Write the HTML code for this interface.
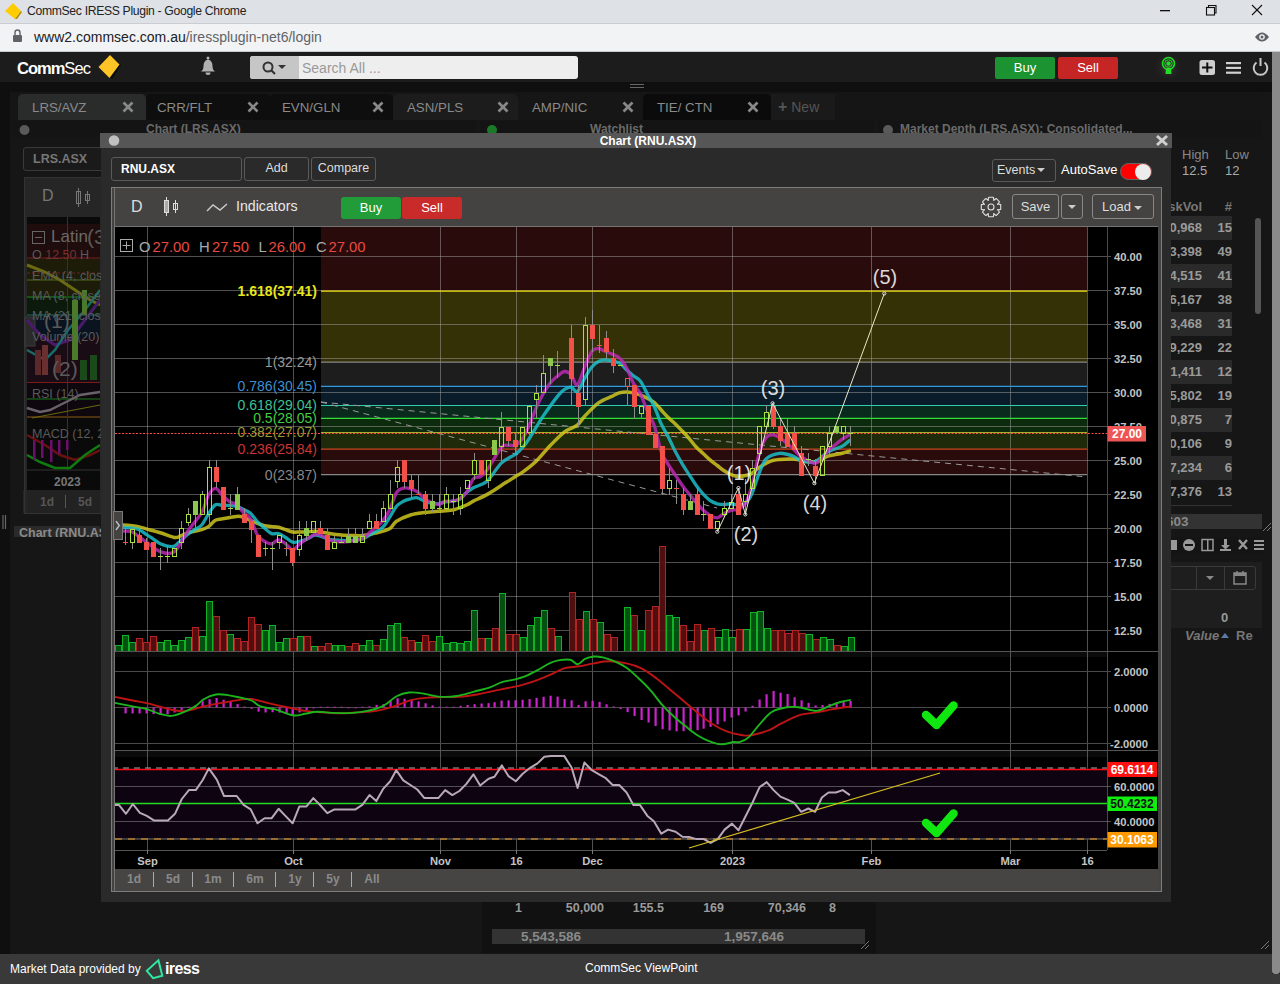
<!DOCTYPE html>
<html><head><meta charset="utf-8">
<style>
*{box-sizing:border-box}
html,body{margin:0;padding:0}
body{width:1280px;height:984px;overflow:hidden;position:relative;background:#161616;font-family:"Liberation Sans",sans-serif}
.a{position:absolute}
.t{position:absolute;white-space:nowrap;line-height:1}
</style></head>
<body>
<!-- chrome title bar -->
<div class="a" style="left:0;top:0;width:1280px;height:24px;background:#dee1e6"></div>
<svg class="a" style="left:0;top:0" width="1280" height="52">
  <polygon points="13,3 21,11 15,19 5,11" fill="#ffcc00"/>
  <polygon points="21,11 15,19 17,19 22,12" fill="#b08a00"/>
  <rect x="1160" y="10" width="10" height="1.3" fill="#111"/>
  <rect x="1206.5" y="7.5" width="8" height="7.5" fill="none" stroke="#111" stroke-width="1.1"/>
  <polyline points="1208.5,7 1208.5,5.5 1216,5.5 1216,13 1215,13" fill="none" stroke="#111" stroke-width="1.1"/>
  <line x1="1252" y1="5" x2="1262" y2="15" stroke="#111" stroke-width="1.1"/>
  <line x1="1262" y1="5" x2="1252" y2="15" stroke="#111" stroke-width="1.1"/>
  <rect x="0" y="24" width="1280" height="27" fill="#f1f3f4"/>
  <rect x="0" y="51" width="1280" height="1" fill="#c8c8c8"/><rect x="0" y="23" width="1280" height="1" fill="#c9ccd1"/>
  <rect x="13" y="35" width="9" height="7" rx="1" fill="#5f6368"/>
  <path d="M15 35 v-2.5 a2.5 2.5 0 0 1 5 0 v2.5" fill="none" stroke="#5f6368" stroke-width="1.4"/>
  <path d="M1255 37 q7-9 14 0 q-7 9-14 0z" fill="#5f6368"/>
  <circle cx="1262" cy="37" r="2.8" fill="#f1f3f4"/>
  <circle cx="1262" cy="37" r="1.5" fill="#5f6368"/>
</svg>
<div class="t" style="left:27px;top:5px;font-size:12.2px;letter-spacing:-0.33px;color:#222">CommSec IRESS Plugin - Google Chrome</div>
<div class="t" style="left:34px;top:30px;font-size:14px;color:#202124">www2.commsec.com.au<span style="color:#5f6368">/iressplugin-net6/login</span></div>

<!-- app header -->
<div class="a" style="left:0;top:52px;width:1280px;height:30px;background:#1c1c1c"></div>
<div class="t" style="left:17px;top:60px;font-size:16.5px;color:#fff;letter-spacing:-0.9px"><b style="letter-spacing:-1px">Comm</b>Sec</div>
<svg class="a" style="left:0;top:52px" width="1280" height="30">
  <polygon points="111,4 121,13 112,27 101,16" fill="#0c0c0c"/>
  <polygon points="110,3 119.5,12.5 109.5,26 98.5,15" fill="#ffc425"/>
  <path d="M201 19.5 q2.5-1.5 2.5-5.5 q0-5.5 4.5-6.5 q4.5 1 4.5 6.5 q0 4 2.5 5.5z" fill="#b0b0b0"/>
  <circle cx="208" cy="6" r="1.5" fill="#b0b0b0"/>
  <path d="M205.5 20.5 a2.5 2.5 0 0 0 5 0z" fill="#b0b0b0"/>
  <rect x="250" y="4" width="328" height="23" rx="3" fill="#eeeeee"/>
  <path d="M250 7 a3 3 0 0 1 3-3 h46 v23 h-46 a3 3 0 0 1-3-3z" fill="#c6c6c6"/>
  <circle cx="268" cy="15" r="4.5" fill="none" stroke="#333" stroke-width="2"/>
  <line x1="271" y1="18" x2="275" y2="22" stroke="#333" stroke-width="2.2"/>
  <polygon points="278,13 286,13 282,17" fill="#333"/>
  <rect x="995" y="5" width="60" height="22" rx="2" fill="#1c9331"/>
  <rect x="1058" y="5" width="60" height="22" rx="2" fill="#c62525"/>
  <defs><radialGradient id="glow"><stop offset="0" stop-color="#444" stop-opacity="0.9"/><stop offset="1" stop-color="#1c1c1c" stop-opacity="0"/></radialGradient></defs>
  <circle cx="1168" cy="15" r="15" fill="url(#glow)"/>
  <circle cx="1168.5" cy="11.5" r="6" fill="none" stroke="#22dd22" stroke-width="1.6"/>
  <circle cx="1168.5" cy="11.5" r="2.2" fill="#22dd22"/>
  <circle cx="1168.5" cy="11.5" r="3.8" fill="none" stroke="#22dd22" stroke-width="1"/>
  <path d="M1166 16 h5 l0.5 6 h-6z" fill="#22dd22"/>
  <rect x="1199.5" y="8" width="15.5" height="15" rx="2.5" fill="#cfcfcf"/>
  <rect x="1202" y="14.5" width="10.5" height="2" fill="#111"/>
  <rect x="1206.3" y="10.5" width="2" height="10" fill="#111"/>
  <rect x="1226" y="10" width="15" height="2.2" fill="#d0d0d0"/>
  <rect x="1226" y="14.8" width="15" height="2.2" fill="#d0d0d0"/>
  <rect x="1226" y="19.6" width="15" height="2.2" fill="#d0d0d0"/>
  <path d="M1256.5 10.5 a6.8 6.8 0 1 0 8 0" fill="none" stroke="#c8c8c8" stroke-width="2"/>
  <line x1="1260.5" y1="6" x2="1260.5" y2="14" stroke="#c8c8c8" stroke-width="2"/>
</svg>
<div class="t" style="left:302px;top:61px;font-size:14px;color:#999">Search All ...</div>
<div class="t" style="left:995px;top:61px;width:60px;text-align:center;font-size:13px;color:#fff">Buy</div>
<div class="t" style="left:1058px;top:61px;width:60px;text-align:center;font-size:13px;color:#fff">Sell</div>

<!-- below header -->
<div class="a" style="left:0;top:82px;width:1272px;height:10px;background:#0f0f0f"></div>
<div class="a" style="left:12px;top:92px;width:1250px;height:29px;background:#151515"></div>
<div class="a" style="left:18px;top:94px;width:128px;height:26px;background:#2a2b2b;border-radius:5px 5px 0 0"></div>
<div class="t" style="left:32px;top:101px;font-size:13.3px;color:#8a8a8a">LRS/AVZ</div>
<svg class="a" style="left:121.5px;top:101px" width="12" height="12"><line x1="1.5" y1="1.5" x2="10.5" y2="10.5" stroke="#888" stroke-width="2.6"/><line x1="10.5" y1="1.5" x2="1.5" y2="10.5" stroke="#888" stroke-width="2.6"/></svg>
<div class="a" style="left:146px;top:94px;width:124px;height:26px;background:#0e0e0e;border-radius:5px 5px 0 0"></div>
<div class="t" style="left:157px;top:101px;font-size:13.3px;color:#8a8a8a">CRR/FLT</div>
<svg class="a" style="left:246.5px;top:101px" width="12" height="12"><line x1="1.5" y1="1.5" x2="10.5" y2="10.5" stroke="#888" stroke-width="2.6"/><line x1="10.5" y1="1.5" x2="1.5" y2="10.5" stroke="#888" stroke-width="2.6"/></svg>
<div class="a" style="left:270px;top:94px;width:123px;height:26px;background:#0e0e0e;border-radius:5px 5px 0 0"></div>
<div class="t" style="left:282px;top:101px;font-size:13.3px;color:#8a8a8a">EVN/GLN</div>
<svg class="a" style="left:371.5px;top:101px" width="12" height="12"><line x1="1.5" y1="1.5" x2="10.5" y2="10.5" stroke="#888" stroke-width="2.6"/><line x1="10.5" y1="1.5" x2="1.5" y2="10.5" stroke="#888" stroke-width="2.6"/></svg>
<div class="a" style="left:393px;top:94px;width:125px;height:26px;background:#1c1c1c;border-radius:5px 5px 0 0"></div>
<div class="t" style="left:407px;top:101px;font-size:13.3px;color:#8a8a8a">ASN/PLS</div>
<svg class="a" style="left:496.5px;top:101px" width="12" height="12"><line x1="1.5" y1="1.5" x2="10.5" y2="10.5" stroke="#888" stroke-width="2.6"/><line x1="10.5" y1="1.5" x2="1.5" y2="10.5" stroke="#888" stroke-width="2.6"/></svg>
<div class="a" style="left:518px;top:94px;width:125px;height:26px;background:#161616;border-radius:5px 5px 0 0"></div>
<div class="t" style="left:532px;top:101px;font-size:13.3px;color:#8a8a8a">AMP/NIC</div>
<svg class="a" style="left:621.5px;top:101px" width="12" height="12"><line x1="1.5" y1="1.5" x2="10.5" y2="10.5" stroke="#888" stroke-width="2.6"/><line x1="10.5" y1="1.5" x2="1.5" y2="10.5" stroke="#888" stroke-width="2.6"/></svg>
<div class="a" style="left:643px;top:94px;width:128px;height:26px;background:#0b0b0b;border-radius:5px 5px 0 0"></div>
<div class="t" style="left:657px;top:101px;font-size:13.3px;color:#8a8a8a">TIE/ CTN</div>
<svg class="a" style="left:746.5px;top:101px" width="12" height="12"><line x1="1.5" y1="1.5" x2="10.5" y2="10.5" stroke="#888" stroke-width="2.6"/><line x1="10.5" y1="1.5" x2="1.5" y2="10.5" stroke="#888" stroke-width="2.6"/></svg>
<div class="a" style="left:771px;top:94px;width:64px;height:26px;background:#1a1a1a"></div>
<div class="t" style="left:778px;top:99px;font-size:14px;color:#555"><b style="font-size:16px">+</b> New</div>
<div class="a" style="left:630px;top:84px;width:14px;height:1px;background:#666"></div><div class="a" style="left:630px;top:87px;width:14px;height:1px;background:#666"></div>
<!-- panel headers -->
<div class="a" style="left:12px;top:121px;width:464px;height:16px;background:#141414"></div>
<div class="a" style="left:480px;top:121px;width:394px;height:16px;background:#141414"></div>
<div class="a" style="left:878px;top:121px;width:384px;height:16px;background:#141414"></div>
<svg class="a" style="left:0;top:120px" width="1280" height="20">
 <circle cx="24.5" cy="10" r="5" fill="#5a5a5a"/>
 <circle cx="492" cy="10" r="5" fill="#1a7a2a"/>
 <circle cx="888" cy="10" r="5" fill="#5a5a5a"/>
</svg>
<div class="t" style="left:146px;top:123px;font-size:12px;font-weight:bold;color:#6a6a6a">Chart (LRS.ASX)</div>
<div class="t" style="left:590px;top:123px;font-size:12px;font-weight:bold;color:#6a6a6a">Watchlist</div>
<div class="t" style="left:900px;top:123px;font-size:12px;font-weight:bold;color:#6a6a6a">Market Depth (LRS.ASX): Consolidated...</div>

<div class="a" style="left:0;top:82px;width:10px;height:872px;background:#0f0f0f"></div>
<!-- left background panel -->
<div class="a" style="left:10px;top:137px;width:466px;height:400px;background:#161616"></div>
<div class="a" style="left:23px;top:147px;width:120px;height:24px;border:1px solid #3a3a3a;border-radius:3px;background:#1a1a1a"></div>
<div class="t" style="left:33px;top:153px;font-size:12.5px;font-weight:bold;color:#777">LRS.ASX</div>
<div class="a" style="left:24px;top:177px;width:90px;height:337px;border:1px solid #333;background:#262626"></div>
<div class="t" style="left:42px;top:188px;font-size:16px;color:#777">D</div>
<svg class="a" style="left:70px;top:186px" width="30" height="24"><line x1="8.5" y1="2" x2="8.5" y2="21" stroke="#777"/><rect x="6.5" y="5.5" width="4" height="12" fill="none" stroke="#777"/><line x1="17.5" y1="5" x2="17.5" y2="18" stroke="#777"/><rect x="15.5" y="8.5" width="4" height="6" fill="none" stroke="#777"/></svg>
<svg class="a" style="left:0;top:0" width="100" height="540">
<rect x="27" y="217" width="73" height="273" fill="#0a0a0a"/>
<rect x="27" y="224" width="73" height="35" fill="#1f0c0c"/>
<rect x="27" y="259" width="73" height="37" fill="#1c1c08"/>
<rect x="27" y="296" width="73" height="20" fill="#0c1a0c"/>
<rect x="27" y="316" width="73" height="22" fill="#0a1420"/>
<rect x="27" y="338" width="73" height="45" fill="#1a0c14"/>
<rect x="27" y="383" width="73" height="35" fill="#0e080e"/>
<line x1="27" y1="258" x2="100" y2="258" stroke="#7a2020"/>
<line x1="27" y1="273" x2="100" y2="273" stroke="#6a2020" stroke-dasharray="3,2"/>
<rect x="25" y="317" width="10" height="29" fill="#2a2a2a" stroke="#3a3a3a"/>
<line x1="27" y1="280" x2="100" y2="280" stroke="#4a6a20"/>
<line x1="27" y1="297" x2="100" y2="297" stroke="#208a20"/>
<line x1="27" y1="315" x2="100" y2="315" stroke="#206a6a"/>
<line x1="27" y1="382.5" x2="100" y2="382.5" stroke="#7a1a1a"/>
<line x1="27" y1="399" x2="100" y2="399" stroke="#1a7a1a"/>
<line x1="27" y1="417" x2="100" y2="417" stroke="#8a5a10"/>
<line x1="27" y1="470" x2="100" y2="470" stroke="#333"/>
<line x1="67.5" y1="217" x2="67.5" y2="470" stroke="#333"/>
<polyline points="27,265 45,272 60,280 75,290 90,300 100,305" fill="none" stroke="#6a6a10" stroke-width="3"/>
<polyline points="27,320 40,335 55,345 70,340 85,320 100,300" fill="none" stroke="#4a1a6a" stroke-width="3"/>
<polyline points="27,350 45,360 55,350 68,330 85,310 100,290" fill="none" stroke="#1a6a6a" stroke-width="2.5"/>
<rect x="72" y="300" width="6" height="60" fill="#4a7a2a"/><rect x="82" y="290" width="5" height="25" fill="#4a7a2a"/>
<rect x="35" y="350" width="6" height="25" fill="#5a2a2a"/><rect x="42" y="345" width="6" height="30" fill="#6a3030"/><rect x="55" y="355" width="6" height="18" fill="#5a2a2a"/>
<rect x="80" y="360" width="7" height="20" fill="#1a4a1a"/><rect x="90" y="355" width="7" height="25" fill="#1a4a1a"/>
<polyline points="27,408 40,412 50,410 60,405 70,400 80,395 100,392" fill="none" stroke="#6a626a" stroke-width="2.5"/>
<line x1="32" y1="418" x2="100" y2="405" stroke="#6a6a10"/>
<polyline points="27,435 45,445 60,455 75,460 90,455 100,450" fill="none" stroke="#6a1010" stroke-width="2.5"/>
<polyline points="27,455 40,462 55,468 70,468 85,455 100,445" fill="none" stroke="#107a10" stroke-width="2.5"/>
<g fill="#6a106a"><rect x="33" y="440" width="2.5" height="20"/><rect x="41" y="440" width="2.5" height="18"/><rect x="50" y="440" width="2.5" height="22"/><rect x="58" y="440" width="2.5" height="14"/><rect x="66" y="440" width="2.5" height="10"/></g>
<rect x="27" y="490" width="73" height="23" fill="#222"/>
<line x1="65.5" y1="495" x2="65.5" y2="508" stroke="#555"/>
<rect x="113" y="511" width="0" height="0"/>
<line x1="3" y1="515" x2="3" y2="529" stroke="#666" stroke-width="1.2"/><line x1="5.5" y1="515" x2="5.5" y2="529" stroke="#666" stroke-width="1.2"/>
<rect x="14" y="526" width="86" height="15" fill="#2a2a2a"/><line x1="24" y1="490" x2="24" y2="513" stroke="#333"/>
</svg>
<div class="t" style="left:51px;top:228px;font-size:17px;color:#6a6a6a">Latin</div>
<svg class="a" style="left:32px;top:231px" width="14" height="14"><rect x="0.5" y="0.5" width="12" height="12" fill="none" stroke="#666"/><line x1="3" y1="6.5" x2="10" y2="6.5" stroke="#666"/></svg>
<div class="t" style="left:32px;top:249px;font-size:12.5px;color:#5a5a5a">O <span style='color:#7a3030'>12.50</span>  H</div>
<div class="t" style="left:32px;top:270px;font-size:12.5px;color:#5a5a5a">EMA (4, close</div>
<div class="t" style="left:32px;top:290px;font-size:12.5px;color:#5a5a5a">MA (8, close</div>
<div class="t" style="left:32px;top:310px;font-size:12.5px;color:#5a5a5a">MA (21, close</div>
<div class="t" style="left:32px;top:331px;font-size:12.5px;color:#5a5a5a">Volume (20)</div>
<div class="t" style="left:32px;top:388px;font-size:12.5px;color:#5a5a5a">RSI (14)</div>
<div class="t" style="left:32px;top:428px;font-size:12.5px;color:#5a5a5a">MACD (12, 2</div>
<div class="t" style="left:87px;top:226px;font-size:21px;color:#5a5a5a">(3)</div>
<div class="t" style="left:44px;top:310px;font-size:21px;color:#5a5a5a">(1)</div>
<div class="t" style="left:52px;top:358px;font-size:21px;color:#5a5a5a">(2)</div>
<div class="t" style="left:54px;top:476px;font-size:12px;font-weight:bold;color:#777">2023</div>
<div class="t" style="left:40px;top:496px;font-size:12px;font-weight:bold;color:#555">1d</div>
<div class="t" style="left:78px;top:496px;font-size:12px;font-weight:bold;color:#555">5d</div>
<div class="t" style="left:19px;top:527px;font-size:12.5px;font-weight:bold;color:#8a8a8a">Chart (RNU.AS</div>
<!-- right background panel -->
<div class="a" style="left:1171px;top:137px;width:91px;height:400px;background:#161616"></div>
<div class="t" style="left:1182px;top:148px;font-size:13px;color:#888">High</div>
<div class="t" style="left:1225px;top:148px;font-size:13px;color:#888">Low</div>
<div class="t" style="left:1182px;top:164px;font-size:13px;color:#aaa">12.5</div>
<div class="t" style="left:1225px;top:164px;font-size:13px;color:#aaa">12</div>
<div class="t" style="left:1150px;top:200px;width:52px;text-align:right;font-size:13px;font-weight:bold;color:#777">AskVol</div>
<div class="t" style="left:1212px;top:200px;width:20px;text-align:right;font-size:13px;font-weight:bold;color:#777">#</div>
<div class="a" style="left:1171px;top:216px;width:61px;height:24px;background:#2a2a2a"></div>
<div class="t" style="left:1140px;top:221px;width:62px;text-align:right;font-size:13px;font-weight:bold;color:#9a9a9a">90,968</div>
<div class="t" style="left:1200px;top:221px;width:32px;text-align:right;font-size:13px;font-weight:bold;color:#9a9a9a">15</div>
<div class="t" style="left:1140px;top:245px;width:62px;text-align:right;font-size:13px;font-weight:bold;color:#9a9a9a">33,398</div>
<div class="t" style="left:1200px;top:245px;width:32px;text-align:right;font-size:13px;font-weight:bold;color:#9a9a9a">49</div>
<div class="a" style="left:1171px;top:264px;width:61px;height:24px;background:#2a2a2a"></div>
<div class="t" style="left:1140px;top:269px;width:62px;text-align:right;font-size:13px;font-weight:bold;color:#9a9a9a">74,515</div>
<div class="t" style="left:1200px;top:269px;width:32px;text-align:right;font-size:13px;font-weight:bold;color:#9a9a9a">41</div>
<div class="t" style="left:1140px;top:293px;width:62px;text-align:right;font-size:13px;font-weight:bold;color:#9a9a9a">56,167</div>
<div class="t" style="left:1200px;top:293px;width:32px;text-align:right;font-size:13px;font-weight:bold;color:#9a9a9a">38</div>
<div class="a" style="left:1171px;top:312px;width:61px;height:24px;background:#2a2a2a"></div>
<div class="t" style="left:1140px;top:317px;width:62px;text-align:right;font-size:13px;font-weight:bold;color:#9a9a9a">33,468</div>
<div class="t" style="left:1200px;top:317px;width:32px;text-align:right;font-size:13px;font-weight:bold;color:#9a9a9a">31</div>
<div class="t" style="left:1140px;top:341px;width:62px;text-align:right;font-size:13px;font-weight:bold;color:#9a9a9a">39,229</div>
<div class="t" style="left:1200px;top:341px;width:32px;text-align:right;font-size:13px;font-weight:bold;color:#9a9a9a">22</div>
<div class="a" style="left:1171px;top:360px;width:61px;height:24px;background:#2a2a2a"></div>
<div class="t" style="left:1140px;top:365px;width:62px;text-align:right;font-size:13px;font-weight:bold;color:#9a9a9a">71,411</div>
<div class="t" style="left:1200px;top:365px;width:32px;text-align:right;font-size:13px;font-weight:bold;color:#9a9a9a">12</div>
<div class="t" style="left:1140px;top:389px;width:62px;text-align:right;font-size:13px;font-weight:bold;color:#9a9a9a">25,802</div>
<div class="t" style="left:1200px;top:389px;width:32px;text-align:right;font-size:13px;font-weight:bold;color:#9a9a9a">19</div>
<div class="a" style="left:1171px;top:408px;width:61px;height:24px;background:#2a2a2a"></div>
<div class="t" style="left:1140px;top:413px;width:62px;text-align:right;font-size:13px;font-weight:bold;color:#9a9a9a">20,875</div>
<div class="t" style="left:1200px;top:413px;width:32px;text-align:right;font-size:13px;font-weight:bold;color:#9a9a9a">7</div>
<div class="t" style="left:1140px;top:437px;width:62px;text-align:right;font-size:13px;font-weight:bold;color:#9a9a9a">90,106</div>
<div class="t" style="left:1200px;top:437px;width:32px;text-align:right;font-size:13px;font-weight:bold;color:#9a9a9a">9</div>
<div class="a" style="left:1171px;top:456px;width:61px;height:24px;background:#2a2a2a"></div>
<div class="t" style="left:1140px;top:461px;width:62px;text-align:right;font-size:13px;font-weight:bold;color:#9a9a9a">17,234</div>
<div class="t" style="left:1200px;top:461px;width:32px;text-align:right;font-size:13px;font-weight:bold;color:#9a9a9a">6</div>
<div class="t" style="left:1140px;top:485px;width:62px;text-align:right;font-size:13px;font-weight:bold;color:#9a9a9a">37,376</div>
<div class="t" style="left:1200px;top:485px;width:32px;text-align:right;font-size:13px;font-weight:bold;color:#9a9a9a">13</div>
<div class="a" style="left:1171px;top:505px;width:61px;height:1px;background:#333"></div>
<div class="a" style="left:1255px;top:218px;width:6px;height:96px;border-radius:3px;background:#555"></div>
<div class="a" style="left:1171px;top:514px;width:91px;height:15px;background:#333"></div>
<div class="t" style="left:1166px;top:515px;font-size:13.5px;font-weight:bold;color:#888">603</div>
<svg class="a" style="left:1262px;top:522px" width="10" height="10"><line x1="1" y1="9" x2="9" y2="1" stroke="#777"/><line x1="5" y1="9" x2="9" y2="5" stroke="#777"/></svg>
<div class="a" style="left:1171px;top:535px;width:91px;height:418px;background:#161616"></div>
<div class="a" style="left:1171px;top:537px;width:91px;height:17px;background:#141414"></div>
<svg class="a" style="left:1171px;top:537px" width="95" height="18"><g fill="#999">
<rect x="0" y="3" width="6" height="10"/><circle cx="18" cy="8" r="6"/><rect x="14" y="7" width="8" height="2" fill="#121212"/>
<rect x="31" y="2.5" width="11" height="11" fill="none" stroke="#999" stroke-width="1.5"/><rect x="36" y="3" width="1.5" height="10"/>
<path d="M53 2h3v6h3l-4.5 4.5L50 8h3z"/><rect x="49" y="12" width="11" height="2"/>
<path d="M68 3l8 9M76 3l-8 9" stroke="#999" stroke-width="2.4"/>
<rect x="83" y="3" width="10" height="2"/><rect x="83" y="7" width="10" height="2"/><rect x="83" y="11" width="10" height="2"/></g></svg>
<div class="a" style="left:1171px;top:562px;width:91px;height:66px;background:#1e1e1e"></div>
<div class="a" style="left:1160px;top:566px;width:96px;height:24px;border:1px solid #3a3a3a;border-radius:3px"></div>
<div class="a" style="left:1196px;top:566px;width:1px;height:24px;background:#3a3a3a"></div>
<div class="a" style="left:1224px;top:566px;width:1px;height:24px;background:#3a3a3a"></div>
<svg class="a" style="left:1205px;top:575px" width="10" height="6"><polygon points="1,1 9,1 5,5" fill="#888"/></svg>
<svg class="a" style="left:1232px;top:570px" width="16" height="16"><rect x="2" y="3" width="12" height="11" fill="none" stroke="#888" stroke-width="1.5"/><rect x="2" y="3" width="12" height="3" fill="#888"/><line x1="5" y1="1" x2="5" y2="4" stroke="#888" stroke-width="1.5"/><line x1="11" y1="1" x2="11" y2="4" stroke="#888" stroke-width="1.5"/></svg>
<div class="t" style="left:1221px;top:611px;font-size:13px;font-weight:bold;color:#999">0</div>
<div class="t" style="left:1185px;top:629px;font-size:13px;font-style:italic;font-weight:bold;color:#777">Value</div>
<svg class="a" style="left:1220px;top:631px" width="10" height="8"><polygon points="1,7 9,7 5,2" fill="#5a7aa8"/></svg>
<div class="t" style="left:1236px;top:629px;width:17px;overflow:hidden;font-size:13px;font-weight:bold;color:#777">Rea</div>
<!-- bottom background -->
<div class="a" style="left:10px;top:537px;width:466px;height:416px;background:#161616"></div>
<div class="a" style="left:482px;top:880px;width:394px;height:73px;background:#111111"></div>
<div class="a" style="left:876px;top:880px;width:396px;height:73px;background:#161616"></div>
<div class="t" style="left:442px;top:902px;width:80px;text-align:right;font-size:12.5px;font-weight:bold;color:#9a9a9a">1</div>
<div class="t" style="left:524px;top:902px;width:80px;text-align:right;font-size:12.5px;font-weight:bold;color:#9a9a9a">50,000</div>
<div class="t" style="left:584px;top:902px;width:80px;text-align:right;font-size:12.5px;font-weight:bold;color:#9a9a9a">155.5</div>
<div class="t" style="left:644px;top:902px;width:80px;text-align:right;font-size:12.5px;font-weight:bold;color:#9a9a9a">169</div>
<div class="t" style="left:726px;top:902px;width:80px;text-align:right;font-size:12.5px;font-weight:bold;color:#9a9a9a">70,346</div>
<div class="t" style="left:756px;top:902px;width:80px;text-align:right;font-size:12.5px;font-weight:bold;color:#9a9a9a">8</div>
<div class="a" style="left:492px;top:929px;width:373px;height:15px;background:#333"></div>
<div class="t" style="left:521px;top:930px;font-size:13.5px;font-weight:bold;color:#8a8a8a">5,543,586</div>
<div class="t" style="left:724px;top:930px;font-size:13.5px;font-weight:bold;color:#8a8a8a">1,957,646</div>
<svg class="a" style="left:860px;top:940px" width="10" height="10"><line x1="1" y1="9" x2="9" y2="1" stroke="#777"/><line x1="5" y1="9" x2="9" y2="5" stroke="#777"/></svg>
<svg class="a" style="left:1260px;top:940px" width="10" height="10"><line x1="1" y1="9" x2="9" y2="1" stroke="#777"/><line x1="5" y1="9" x2="9" y2="5" stroke="#777"/></svg>

<!-- right grey scrollbar -->
<div class="a" style="left:1272px;top:52px;width:8px;height:922px;background:#8a8a8a;border-radius:0 0 3px 3px"></div>
<div class="a" style="left:1272px;top:974px;width:8px;height:10px;background:#3a3a3a"></div>

<!-- footer -->
<div class="a" style="left:0;top:954px;width:1272px;height:30px;background:#393939"></div>
<div class="t" style="left:10px;top:963px;font-size:12px;color:#fff">Market Data provided by</div>
<svg class="a" style="left:140px;top:955px" width="30" height="28"><polygon points="18.4,5.3 22.3,20.8 13.1,23.2 6.8,15.8" fill="none" stroke="#2ee8a0" stroke-width="2"/></svg>
<div class="t" style="left:165px;top:961px;font-size:16px;font-weight:bold;color:#fff;letter-spacing:-0.6px">iress</div>
<div class="t" style="left:585px;top:962px;font-size:12px;color:#fff">CommSec ViewPoint</div>

<!-- modal -->
<div class="a" style="left:100px;top:133px;width:1072px;height:15px;background:#565656"></div>
<div class="a" style="left:101px;top:148px;width:1070px;height:754px;background:#2a2a2a"></div>
<svg class="a" style="left:100px;top:133px" width="1072" height="16">
  <circle cx="14" cy="7.5" r="5.3" fill="#c0c0c0"/>
  <line x1="1057" y1="3" x2="1067" y2="12" stroke="#d0d0d0" stroke-width="3"/>
  <line x1="1067" y1="3" x2="1057" y2="12" stroke="#d0d0d0" stroke-width="3"/>
</svg>
<div class="t" style="left:124px;top:135px;width:1048px;text-align:center;font-size:12px;font-weight:bold;color:#fff">Chart (RNU.ASX)</div>
<!-- modal toolbar row 1 -->
<div class="a" style="left:111px;top:157px;width:131px;height:24px;border:1px solid #5a5a5a;border-radius:3px;background:#2a2a2a"></div>
<div class="t" style="left:121px;top:163px;font-size:12px;font-weight:bold;color:#fff">RNU.ASX</div>
<div class="a" style="left:244px;top:157px;width:65px;height:24px;border:1px solid #5a5a5a;border-radius:3px"></div>
<div class="t" style="left:244px;top:162px;width:65px;text-align:center;font-size:12.5px;color:#ddd">Add</div>
<div class="a" style="left:311px;top:157px;width:65px;height:24px;border:1px solid #5a5a5a;border-radius:3px"></div>
<div class="t" style="left:311px;top:162px;width:65px;text-align:center;font-size:12.5px;color:#ddd">Compare</div>
<div class="a" style="left:992px;top:159px;width:64px;height:23px;border:1px solid #5a5a5a;border-radius:3px"></div>
<div class="t" style="left:997px;top:164px;font-size:12.5px;color:#ddd">Events</div>
<svg class="a" style="left:1036px;top:167px" width="10" height="6"><polygon points="1,1 9,1 5,5" fill="#ccc"/></svg>
<div class="t" style="left:1061px;top:163px;font-size:13px;color:#fff">AutoSave</div>
<div class="a" style="left:1120px;top:163px;width:32px;height:17px;border-radius:9px;background:#ff0000;border:1px solid #666"></div>
<div class="a" style="left:1135px;top:163.5px;width:16px;height:16px;border-radius:8px;background:#ececec"></div>

<!-- chart frame -->
<div class="a" style="left:111px;top:187px;width:51px;height:0"></div>
<div class="a" style="left:111px;top:187px;width:1051px;height:705px;border:1px solid #7c7c7c;background:#444342"></div>
<div class="a" style="left:114px;top:188px;width:1px;height:703px;background:#747474"></div>
<div class="a" style="left:115px;top:226px;width:1043px;height:1px;background:#747474"></div>
<div class="t" style="left:131px;top:199px;font-size:16px;color:#ddd">D</div>
<svg class="a" style="left:160px;top:195px" width="30" height="24">
  <line x1="6.5" y1="2" x2="6.5" y2="21" stroke="#ddd"/>
  <rect x="4.5" y="5.5" width="4" height="12" fill="#aaa" stroke="#ddd"/>
  <line x1="15.5" y1="5" x2="15.5" y2="18" stroke="#ddd"/>
  <rect x="13.5" y="8.5" width="4" height="6" fill="none" stroke="#ddd"/>
</svg>
<svg class="a" style="left:205px;top:200px" width="24" height="14"><polyline points="2,11 8,5 15,10 22,4" fill="none" stroke="#ccc" stroke-width="1.4"/></svg>
<div class="t" style="left:236px;top:199px;font-size:14.2px;color:#e8e8e8">Indicators</div>
<div class="a" style="left:341px;top:197px;width:60px;height:22px;border-radius:3px;background:#219c39"></div>
<div class="a" style="left:402px;top:197px;width:60px;height:22px;border-radius:3px;background:#c92a2a"></div>
<div class="t" style="left:341px;top:201px;width:60px;text-align:center;font-size:13px;color:#fff">Buy</div>
<div class="t" style="left:402px;top:201px;width:60px;text-align:center;font-size:13px;color:#fff">Sell</div>
<svg class="a" style="left:979px;top:195px" width="24" height="24"><polygon points="18.57,9.06 21.71,9.62 21.71,14.38 18.57,14.94 18.72,14.57 20.55,17.19 17.19,20.55 14.57,18.72 14.94,18.57 14.38,21.71 9.62,21.71 9.06,18.57 9.43,18.72 6.81,20.55 3.45,17.19 5.28,14.57 5.43,14.94 2.29,14.38 2.29,9.62 5.43,9.06 5.28,9.43 3.45,6.81 6.81,3.45 9.43,5.28 9.06,5.43 9.62,2.29 14.38,2.29 14.94,5.43 14.57,5.28 17.19,3.45 20.55,6.81 18.72,9.43" fill="none" stroke="#e0e0e0" stroke-width="1.1" stroke-linejoin="round"/><circle cx="12" cy="12" r="3" fill="none" stroke="#e0e0e0" stroke-width="1.1"/></svg>
<div class="a" style="left:1012px;top:194px;width:47px;height:25px;border:1px solid #888;border-radius:3px"></div>
<div class="t" style="left:1012px;top:200px;width:47px;text-align:center;font-size:13px;color:#ddd">Save</div>
<div class="a" style="left:1061px;top:194px;width:22px;height:25px;border:1px solid #888;border-radius:3px"></div>
<svg class="a" style="left:1067px;top:204px" width="10" height="6"><polygon points="1,1 9,1 5,5" fill="#ccc"/></svg>
<div class="a" style="left:1092px;top:194px;width:62px;height:25px;border:1px solid #888;border-radius:3px"></div>
<div class="t" style="left:1102px;top:200px;font-size:13px;color:#ddd">Load</div>
<svg class="a" style="left:1133px;top:205px" width="10" height="6"><polygon points="1,1 9,1 5,5" fill="#ccc"/></svg>

<svg class="a" style="left:0;top:0" width="1280" height="984" viewBox="0 0 1280 984">
<rect x="115" y="227" width="1043" height="642" fill="#000"/>
<rect x="115" y="652" width="992" height="5" fill="#0b0b0b"/>
<rect x="115" y="751" width="992" height="6" fill="#0b0b0b"/>
<rect x="321" y="227" width="766" height="64" fill="#2a0b0b"/>
<rect x="321" y="291" width="766" height="71" fill="#343106"/>
<rect x="321" y="362" width="766" height="24" fill="#1d1d1d"/>
<rect x="321" y="386" width="766" height="19.5" fill="#0a1c2a"/>
<rect x="321" y="405.5" width="766" height="12.800000000000011" fill="#0a2a1e"/>
<rect x="321" y="418.3" width="766" height="14.5" fill="#0c2a0c"/>
<rect x="321" y="432.8" width="766" height="16.399999999999977" fill="#1e2a0a"/>
<rect x="321" y="449.2" width="766" height="25.400000000000034" fill="#2a0b0b"/>
<line x1="115" y1="256.5" x2="1111" y2="256.5" stroke="#a8a8a8" stroke-opacity="0.48" stroke-width="1"/>
<line x1="115" y1="290.5" x2="1111" y2="290.5" stroke="#a8a8a8" stroke-opacity="0.48" stroke-width="1"/>
<line x1="115" y1="324.5" x2="1111" y2="324.5" stroke="#a8a8a8" stroke-opacity="0.48" stroke-width="1"/>
<line x1="115" y1="358.5" x2="1111" y2="358.5" stroke="#a8a8a8" stroke-opacity="0.48" stroke-width="1"/>
<line x1="115" y1="392.5" x2="1111" y2="392.5" stroke="#a8a8a8" stroke-opacity="0.48" stroke-width="1"/>
<line x1="115" y1="426.5" x2="1111" y2="426.5" stroke="#a8a8a8" stroke-opacity="0.48" stroke-width="1"/>
<line x1="115" y1="460.5" x2="1111" y2="460.5" stroke="#a8a8a8" stroke-opacity="0.48" stroke-width="1"/>
<line x1="115" y1="494.5" x2="1111" y2="494.5" stroke="#a8a8a8" stroke-opacity="0.48" stroke-width="1"/>
<line x1="115" y1="528.5" x2="1111" y2="528.5" stroke="#a8a8a8" stroke-opacity="0.48" stroke-width="1"/>
<line x1="115" y1="562.5" x2="1111" y2="562.5" stroke="#a8a8a8" stroke-opacity="0.48" stroke-width="1"/>
<line x1="115" y1="596.5" x2="1111" y2="596.5" stroke="#a8a8a8" stroke-opacity="0.48" stroke-width="1"/>
<line x1="115" y1="630.5" x2="1111" y2="630.5" stroke="#a8a8a8" stroke-opacity="0.48" stroke-width="1"/>
<line x1="147.5" y1="227" x2="147.5" y2="850" stroke="#a8a8a8" stroke-opacity="0.48" stroke-width="1"/>
<line x1="293.5" y1="227" x2="293.5" y2="850" stroke="#a8a8a8" stroke-opacity="0.48" stroke-width="1"/>
<line x1="440.5" y1="227" x2="440.5" y2="850" stroke="#a8a8a8" stroke-opacity="0.48" stroke-width="1"/>
<line x1="516.5" y1="227" x2="516.5" y2="850" stroke="#a8a8a8" stroke-opacity="0.48" stroke-width="1"/>
<line x1="592.5" y1="227" x2="592.5" y2="850" stroke="#a8a8a8" stroke-opacity="0.48" stroke-width="1"/>
<line x1="732.5" y1="227" x2="732.5" y2="850" stroke="#a8a8a8" stroke-opacity="0.48" stroke-width="1"/>
<line x1="871.5" y1="227" x2="871.5" y2="850" stroke="#a8a8a8" stroke-opacity="0.48" stroke-width="1"/>
<line x1="1010.5" y1="227" x2="1010.5" y2="850" stroke="#a8a8a8" stroke-opacity="0.48" stroke-width="1"/>
<line x1="1087.5" y1="227" x2="1087.5" y2="850" stroke="#a8a8a8" stroke-opacity="0.48" stroke-width="1"/>
<line x1="1107.5" y1="227" x2="1107.5" y2="850" stroke="#4a4a4a"/>
<line x1="321" y1="291.1" x2="1087" y2="291.1" stroke="#f0e010" stroke-width="1.2"/>
<line x1="321" y1="362.2" x2="1087" y2="362.2" stroke="#888" stroke-width="1.2"/>
<line x1="321" y1="386.3" x2="1087" y2="386.3" stroke="#3399dd" stroke-width="1.2"/>
<line x1="321" y1="405.5" x2="1087" y2="405.5" stroke="#33ccaa" stroke-width="1.2"/>
<line x1="321" y1="418.3" x2="1087" y2="418.3" stroke="#33dd33" stroke-width="1.2"/>
<line x1="321" y1="432.5" x2="1087" y2="432.5" stroke="#a8b02a" stroke-width="1.2"/>
<line x1="321" y1="449.2" x2="1087" y2="449.2" stroke="#cc4422" stroke-width="1.2"/>
<line x1="321" y1="474.6" x2="1087" y2="474.6" stroke="#888" stroke-width="1.2"/>
<line x1="321" y1="402" x2="1087" y2="477" stroke="#999" stroke-width="1" stroke-dasharray="6,5"/>
<line x1="321" y1="402" x2="717" y2="508" stroke="#999" stroke-width="1" stroke-dasharray="6,5"/>
<line x1="115" y1="433.5" x2="1107" y2="433.5" stroke="#ff4a4a" stroke-width="1" stroke-dasharray="2,1.5"/>
<text x="317" y="296" text-anchor="end" font-size="14" fill="#e6e61e" font-family="Liberation Sans" font-weight="bold">1.618(37.41)</text>
<text x="317" y="367" text-anchor="end" font-size="14" fill="#999" font-family="Liberation Sans" >1(32.24)</text>
<text x="317" y="391" text-anchor="end" font-size="14" fill="#3d8fd0" font-family="Liberation Sans" >0.786(30.45)</text>
<text x="317" y="410" text-anchor="end" font-size="14" fill="#40c090" font-family="Liberation Sans" >0.618(29.04)</text>
<text x="317" y="423" text-anchor="end" font-size="14" fill="#44cc44" font-family="Liberation Sans" >0.5(28.05)</text>
<text x="317" y="437" text-anchor="end" font-size="14" fill="#999933" font-family="Liberation Sans" >0.382(27.07)</text>
<text x="317" y="454" text-anchor="end" font-size="14" fill="#cc3333" font-family="Liberation Sans" >0.236(25.84)</text>
<text x="317" y="480" text-anchor="end" font-size="14" fill="#888" font-family="Liberation Sans" >0(23.87)</text>
<rect x="115.5" y="645.5" width="6" height="6" fill="#035a12" fill-opacity="0.9" stroke="#12b226" stroke-width="1"/>
<rect x="122.5" y="635.5" width="6" height="16" fill="#035a12" fill-opacity="0.9" stroke="#12b226" stroke-width="1"/>
<rect x="129.5" y="642.5" width="6" height="9" fill="#035a12" fill-opacity="0.9" stroke="#12b226" stroke-width="1"/>
<rect x="136.5" y="638.5" width="6" height="13" fill="#5a1010" fill-opacity="0.9" stroke="#b02424" stroke-width="1"/>
<rect x="143.5" y="642.5" width="6" height="9" fill="#5a1010" fill-opacity="0.9" stroke="#b02424" stroke-width="1"/>
<rect x="150.5" y="636.5" width="6" height="15" fill="#5a1010" fill-opacity="0.9" stroke="#b02424" stroke-width="1"/>
<rect x="157.5" y="642.5" width="6" height="9" fill="#035a12" fill-opacity="0.9" stroke="#12b226" stroke-width="1"/>
<rect x="164.5" y="640.5" width="6" height="11" fill="#035a12" fill-opacity="0.9" stroke="#12b226" stroke-width="1"/>
<rect x="171.5" y="645.5" width="6" height="6" fill="#035a12" fill-opacity="0.9" stroke="#12b226" stroke-width="1"/>
<rect x="178.5" y="640.5" width="6" height="11" fill="#035a12" fill-opacity="0.9" stroke="#12b226" stroke-width="1"/>
<rect x="185.5" y="637.5" width="6" height="14" fill="#035a12" fill-opacity="0.9" stroke="#12b226" stroke-width="1"/>
<rect x="192.5" y="627.5" width="6" height="24" fill="#5a1010" fill-opacity="0.9" stroke="#b02424" stroke-width="1"/>
<rect x="199.5" y="636.5" width="6" height="15" fill="#035a12" fill-opacity="0.9" stroke="#12b226" stroke-width="1"/>
<rect x="206.5" y="601.5" width="6" height="50" fill="#035a12" fill-opacity="0.9" stroke="#12b226" stroke-width="1"/>
<rect x="213.5" y="616.5" width="6" height="35" fill="#5a1010" fill-opacity="0.9" stroke="#b02424" stroke-width="1"/>
<rect x="220.5" y="630.5" width="6" height="21" fill="#5a1010" fill-opacity="0.9" stroke="#b02424" stroke-width="1"/>
<rect x="227.5" y="634.5" width="6" height="17" fill="#035a12" fill-opacity="0.9" stroke="#12b226" stroke-width="1"/>
<rect x="234.5" y="638.5" width="6" height="13" fill="#5a1010" fill-opacity="0.9" stroke="#b02424" stroke-width="1"/>
<rect x="241.5" y="641.5" width="6" height="10" fill="#5a1010" fill-opacity="0.9" stroke="#b02424" stroke-width="1"/>
<rect x="248.5" y="617.5" width="6" height="34" fill="#5a1010" fill-opacity="0.9" stroke="#b02424" stroke-width="1"/>
<rect x="255.5" y="624.5" width="6" height="27" fill="#5a1010" fill-opacity="0.9" stroke="#b02424" stroke-width="1"/>
<rect x="262.5" y="630.5" width="6" height="21" fill="#035a12" fill-opacity="0.9" stroke="#12b226" stroke-width="1"/>
<rect x="269.5" y="625.5" width="6" height="26" fill="#035a12" fill-opacity="0.9" stroke="#12b226" stroke-width="1"/>
<rect x="276.5" y="642.5" width="6" height="9" fill="#035a12" fill-opacity="0.9" stroke="#12b226" stroke-width="1"/>
<rect x="283.5" y="638.5" width="6" height="13" fill="#035a12" fill-opacity="0.9" stroke="#12b226" stroke-width="1"/>
<rect x="290.5" y="638.5" width="6" height="13" fill="#5a1010" fill-opacity="0.9" stroke="#b02424" stroke-width="1"/>
<rect x="297.5" y="636.5" width="6" height="15" fill="#035a12" fill-opacity="0.9" stroke="#12b226" stroke-width="1"/>
<rect x="304.5" y="636.5" width="6" height="15" fill="#5a1010" fill-opacity="0.9" stroke="#b02424" stroke-width="1"/>
<rect x="311.5" y="646.5" width="6" height="5" fill="#035a12" fill-opacity="0.9" stroke="#12b226" stroke-width="1"/>
<rect x="318.5" y="646.5" width="6" height="5" fill="#5a1010" fill-opacity="0.9" stroke="#b02424" stroke-width="1"/>
<rect x="325.5" y="643.5" width="6" height="8" fill="#5a1010" fill-opacity="0.9" stroke="#b02424" stroke-width="1"/>
<rect x="332.5" y="645.5" width="5" height="6" fill="#035a12" fill-opacity="0.9" stroke="#12b226" stroke-width="1"/>
<rect x="338.5" y="645.5" width="6" height="6" fill="#035a12" fill-opacity="0.9" stroke="#12b226" stroke-width="1"/>
<rect x="345.5" y="646.5" width="6" height="5" fill="#5a1010" fill-opacity="0.9" stroke="#b02424" stroke-width="1"/>
<rect x="352.5" y="643.5" width="6" height="8" fill="#5a1010" fill-opacity="0.9" stroke="#b02424" stroke-width="1"/>
<rect x="359.5" y="645.5" width="6" height="6" fill="#035a12" fill-opacity="0.9" stroke="#12b226" stroke-width="1"/>
<rect x="366.5" y="640.5" width="6" height="11" fill="#035a12" fill-opacity="0.9" stroke="#12b226" stroke-width="1"/>
<rect x="373.5" y="645.5" width="6" height="6" fill="#5a1010" fill-opacity="0.9" stroke="#b02424" stroke-width="1"/>
<rect x="380.5" y="639.5" width="6" height="12" fill="#035a12" fill-opacity="0.9" stroke="#12b226" stroke-width="1"/>
<rect x="387.5" y="625.5" width="6" height="26" fill="#035a12" fill-opacity="0.9" stroke="#12b226" stroke-width="1"/>
<rect x="394.5" y="623.5" width="6" height="28" fill="#035a12" fill-opacity="0.9" stroke="#12b226" stroke-width="1"/>
<rect x="401.5" y="637.5" width="6" height="14" fill="#5a1010" fill-opacity="0.9" stroke="#b02424" stroke-width="1"/>
<rect x="408.5" y="640.5" width="6" height="11" fill="#5a1010" fill-opacity="0.9" stroke="#b02424" stroke-width="1"/>
<rect x="415.5" y="642.5" width="6" height="9" fill="#035a12" fill-opacity="0.9" stroke="#12b226" stroke-width="1"/>
<rect x="422.5" y="635.5" width="6" height="16" fill="#5a1010" fill-opacity="0.9" stroke="#b02424" stroke-width="1"/>
<rect x="429.5" y="641.5" width="6" height="10" fill="#5a1010" fill-opacity="0.9" stroke="#b02424" stroke-width="1"/>
<rect x="436.5" y="636.5" width="6" height="15" fill="#035a12" fill-opacity="0.9" stroke="#12b226" stroke-width="1"/>
<rect x="443.5" y="643.5" width="6" height="8" fill="#035a12" fill-opacity="0.9" stroke="#12b226" stroke-width="1"/>
<rect x="450.5" y="642.5" width="6" height="9" fill="#035a12" fill-opacity="0.9" stroke="#12b226" stroke-width="1"/>
<rect x="457.5" y="643.5" width="6" height="8" fill="#035a12" fill-opacity="0.9" stroke="#12b226" stroke-width="1"/>
<rect x="464.5" y="641.5" width="6" height="10" fill="#035a12" fill-opacity="0.9" stroke="#12b226" stroke-width="1"/>
<rect x="471.5" y="610.5" width="6" height="41" fill="#035a12" fill-opacity="0.9" stroke="#12b226" stroke-width="1"/>
<rect x="478.5" y="638.5" width="6" height="13" fill="#5a1010" fill-opacity="0.9" stroke="#b02424" stroke-width="1"/>
<rect x="485.5" y="638.5" width="6" height="13" fill="#035a12" fill-opacity="0.9" stroke="#12b226" stroke-width="1"/>
<rect x="492.5" y="628.5" width="6" height="23" fill="#5a1010" fill-opacity="0.9" stroke="#b02424" stroke-width="1"/>
<rect x="499.5" y="593.5" width="6" height="58" fill="#035a12" fill-opacity="0.9" stroke="#12b226" stroke-width="1"/>
<rect x="506.5" y="634.5" width="6" height="17" fill="#5a1010" fill-opacity="0.9" stroke="#b02424" stroke-width="1"/>
<rect x="513.5" y="634.5" width="6" height="17" fill="#5a1010" fill-opacity="0.9" stroke="#b02424" stroke-width="1"/>
<rect x="520.5" y="637.5" width="6" height="14" fill="#035a12" fill-opacity="0.9" stroke="#12b226" stroke-width="1"/>
<rect x="527.5" y="625.5" width="6" height="26" fill="#035a12" fill-opacity="0.9" stroke="#12b226" stroke-width="1"/>
<rect x="534.5" y="617.5" width="6" height="34" fill="#035a12" fill-opacity="0.9" stroke="#12b226" stroke-width="1"/>
<rect x="541.5" y="610.5" width="6" height="41" fill="#035a12" fill-opacity="0.9" stroke="#12b226" stroke-width="1"/>
<rect x="548.5" y="628.5" width="6" height="23" fill="#5a1010" fill-opacity="0.9" stroke="#b02424" stroke-width="1"/>
<rect x="555.5" y="636.5" width="6" height="15" fill="#035a12" fill-opacity="0.9" stroke="#12b226" stroke-width="1"/>
<rect x="569.5" y="592.5" width="6" height="59" fill="#5a1010" fill-opacity="0.9" stroke="#b02424" stroke-width="1"/>
<rect x="576.5" y="619.5" width="6" height="32" fill="#5a1010" fill-opacity="0.9" stroke="#b02424" stroke-width="1"/>
<rect x="583.5" y="611.5" width="6" height="40" fill="#035a12" fill-opacity="0.9" stroke="#12b226" stroke-width="1"/>
<rect x="590.5" y="619.5" width="6" height="32" fill="#5a1010" fill-opacity="0.9" stroke="#b02424" stroke-width="1"/>
<rect x="597.5" y="622.5" width="6" height="29" fill="#035a12" fill-opacity="0.9" stroke="#12b226" stroke-width="1"/>
<rect x="604.5" y="634.5" width="6" height="17" fill="#5a1010" fill-opacity="0.9" stroke="#b02424" stroke-width="1"/>
<rect x="611.5" y="637.5" width="6" height="14" fill="#5a1010" fill-opacity="0.9" stroke="#b02424" stroke-width="1"/>
<rect x="624.5" y="607.5" width="6" height="44" fill="#035a12" fill-opacity="0.9" stroke="#12b226" stroke-width="1"/>
<rect x="631.5" y="615.5" width="6" height="36" fill="#5a1010" fill-opacity="0.9" stroke="#b02424" stroke-width="1"/>
<rect x="638.5" y="630.5" width="6" height="21" fill="#035a12" fill-opacity="0.9" stroke="#12b226" stroke-width="1"/>
<rect x="645.5" y="610.5" width="6" height="41" fill="#5a1010" fill-opacity="0.9" stroke="#b02424" stroke-width="1"/>
<rect x="652.5" y="606.5" width="6" height="45" fill="#5a1010" fill-opacity="0.9" stroke="#b02424" stroke-width="1"/>
<rect x="659.5" y="546.5" width="6" height="105" fill="#5a1010" fill-opacity="0.9" stroke="#b02424" stroke-width="1"/>
<rect x="666.5" y="615.5" width="6" height="36" fill="#035a12" fill-opacity="0.9" stroke="#12b226" stroke-width="1"/>
<rect x="673.5" y="617.5" width="6" height="34" fill="#035a12" fill-opacity="0.9" stroke="#12b226" stroke-width="1"/>
<rect x="680.5" y="625.5" width="6" height="26" fill="#5a1010" fill-opacity="0.9" stroke="#b02424" stroke-width="1"/>
<rect x="687.5" y="641.5" width="6" height="10" fill="#5a1010" fill-opacity="0.9" stroke="#b02424" stroke-width="1"/>
<rect x="694.5" y="624.5" width="6" height="27" fill="#5a1010" fill-opacity="0.9" stroke="#b02424" stroke-width="1"/>
<rect x="701.5" y="630.5" width="6" height="21" fill="#035a12" fill-opacity="0.9" stroke="#12b226" stroke-width="1"/>
<rect x="708.5" y="628.5" width="6" height="23" fill="#5a1010" fill-opacity="0.9" stroke="#b02424" stroke-width="1"/>
<rect x="715.5" y="637.5" width="6" height="14" fill="#035a12" fill-opacity="0.9" stroke="#12b226" stroke-width="1"/>
<rect x="722.5" y="629.5" width="6" height="22" fill="#035a12" fill-opacity="0.9" stroke="#12b226" stroke-width="1"/>
<rect x="729.5" y="637.5" width="6" height="14" fill="#035a12" fill-opacity="0.9" stroke="#12b226" stroke-width="1"/>
<rect x="736.5" y="629.5" width="6" height="22" fill="#5a1010" fill-opacity="0.9" stroke="#b02424" stroke-width="1"/>
<rect x="743.5" y="629.5" width="6" height="22" fill="#035a12" fill-opacity="0.9" stroke="#12b226" stroke-width="1"/>
<rect x="750.5" y="612.5" width="6" height="39" fill="#035a12" fill-opacity="0.9" stroke="#12b226" stroke-width="1"/>
<rect x="757.5" y="611.5" width="6" height="40" fill="#035a12" fill-opacity="0.9" stroke="#12b226" stroke-width="1"/>
<rect x="764.5" y="628.5" width="6" height="23" fill="#035a12" fill-opacity="0.9" stroke="#12b226" stroke-width="1"/>
<rect x="771.5" y="630.5" width="6" height="21" fill="#5a1010" fill-opacity="0.9" stroke="#b02424" stroke-width="1"/>
<rect x="778.5" y="630.5" width="6" height="21" fill="#5a1010" fill-opacity="0.9" stroke="#b02424" stroke-width="1"/>
<rect x="785.5" y="633.5" width="6" height="18" fill="#5a1010" fill-opacity="0.9" stroke="#b02424" stroke-width="1"/>
<rect x="792.5" y="630.5" width="6" height="21" fill="#5a1010" fill-opacity="0.9" stroke="#b02424" stroke-width="1"/>
<rect x="799.5" y="633.5" width="6" height="18" fill="#5a1010" fill-opacity="0.9" stroke="#b02424" stroke-width="1"/>
<rect x="806.5" y="634.5" width="6" height="17" fill="#035a12" fill-opacity="0.9" stroke="#12b226" stroke-width="1"/>
<rect x="813.5" y="639.5" width="6" height="12" fill="#5a1010" fill-opacity="0.9" stroke="#b02424" stroke-width="1"/>
<rect x="820.5" y="637.5" width="6" height="14" fill="#035a12" fill-opacity="0.9" stroke="#12b226" stroke-width="1"/>
<rect x="827.5" y="639.5" width="6" height="12" fill="#035a12" fill-opacity="0.9" stroke="#12b226" stroke-width="1"/>
<rect x="834.5" y="645.5" width="6" height="6" fill="#5a1010" fill-opacity="0.9" stroke="#b02424" stroke-width="1"/>
<rect x="841.5" y="646.5" width="6" height="5" fill="#035a12" fill-opacity="0.9" stroke="#12b226" stroke-width="1"/>
<rect x="848.5" y="637.5" width="6" height="14" fill="#035a12" fill-opacity="0.9" stroke="#12b226" stroke-width="1"/>
<path d="M122.8,525.0 C124.4,525.1 129.5,525.5 132.2,525.8 C134.9,526.1 136.9,526.4 139.2,526.9 C141.6,527.4 142.7,527.9 146.2,528.9 C149.8,529.9 155.6,531.4 160.3,532.8 C165.0,534.2 171.0,537.0 174.4,537.5 C177.8,538.0 178.4,536.7 180.6,535.9 C182.8,535.2 185.3,533.6 187.7,532.8 C190.0,532.0 192.3,531.8 194.7,531.2 C197.0,530.7 199.4,530.5 201.7,529.7 C204.0,528.9 206.1,528.1 208.4,526.6 C210.7,525.0 213.1,521.6 215.5,520.3 C217.8,519.0 219.0,519.4 222.5,518.8 C226.0,518.1 233.1,516.7 236.6,516.4 C240.1,516.1 241.1,516.5 243.4,517.2 C245.8,517.8 248.1,519.3 250.5,520.3 C252.8,521.4 255.2,522.5 257.5,523.4 C259.8,524.3 262.2,525.3 264.5,525.8 C266.9,526.3 269.2,526.3 271.6,526.6 C273.9,526.8 276.2,526.8 278.6,527.3 C280.9,527.9 283.3,528.9 285.6,529.7 C288.0,530.5 290.3,531.6 292.7,532.0 C295.0,532.4 297.3,532.0 299.7,532.0 C302.0,532.0 304.2,532.2 306.7,532.0 C309.3,531.9 311.5,531.1 315.0,531.2 C318.5,531.4 323.1,532.5 327.5,533.1 C331.9,533.8 336.8,534.6 341.5,535.0 C346.2,535.4 352.0,535.5 355.5,535.6 C359.0,535.7 359.2,536.0 362.5,535.6 C365.8,535.2 371.0,534.3 375.5,533.1 C380.0,532.0 386.0,530.7 389.5,528.8 C393.0,526.8 393.0,523.5 396.5,521.2 C400.0,519.0 405.8,516.5 410.5,515.0 C415.2,513.5 419.8,513.1 424.5,512.5 C429.2,511.9 433.8,511.7 438.5,511.2 C443.2,510.8 447.8,511.0 452.5,510.0 C457.2,509.0 463.0,506.5 466.5,505.0 C470.0,503.5 469.9,502.9 473.4,501.1 C476.9,499.4 482.6,497.0 487.3,494.4 C491.9,491.8 496.6,488.5 501.3,485.5 C506.0,482.5 511.9,478.8 515.4,476.5 C519.0,474.3 519.1,474.7 522.6,472.1 C526.1,469.5 531.8,465.4 536.4,460.9 C541.1,456.4 545.8,450.1 550.5,445.3 C555.2,440.4 560.1,435.2 564.6,431.8 C569.1,428.5 574.0,427.7 577.3,425.1 C580.7,422.5 581.2,419.9 584.7,416.2 C588.2,412.5 593.9,406.1 598.5,402.8 C603.2,399.4 609.0,397.7 612.4,396.1 C615.8,394.4 616.9,393.6 619.2,392.9 C621.5,392.2 623.8,391.9 626.2,391.9 C628.6,391.9 631.1,392.4 633.5,392.9 C635.9,393.5 638.2,394.2 640.5,395.1 C642.8,396.0 645.0,397.0 647.3,398.3 C649.6,399.5 652.1,400.6 654.4,402.5 C656.7,404.5 658.9,407.5 661.2,410.0 C663.5,412.5 665.9,415.2 668.2,417.5 C670.6,419.8 672.9,421.6 675.3,423.9 C677.7,426.2 680.2,428.9 682.5,431.3 C684.9,433.8 687.1,436.1 689.4,438.8 C691.7,441.5 694.1,444.9 696.4,447.3 C698.8,449.8 701.1,451.6 703.4,453.7 C705.8,455.9 708.0,458.2 710.3,460.1 C712.6,462.1 715.0,463.7 717.3,465.5 C719.6,467.3 721.8,469.3 724.1,470.8 C726.5,472.3 728.8,473.7 731.2,474.7 C733.6,475.7 736.0,476.6 738.4,476.8 C740.8,476.9 743.3,476.1 745.6,475.5 C747.9,474.9 749.9,474.6 752.1,473.2 C754.4,471.9 755.8,469.7 759.2,467.6 C762.6,465.4 766.9,461.9 772.6,460.5 C778.3,459.0 786.4,458.8 793.4,459.0 C800.3,459.3 808.6,462.4 814.4,461.9 C820.2,461.4 823.4,457.6 828.0,456.2 C832.7,454.8 838.7,454.2 842.3,453.3 C845.8,452.5 848.2,451.5 849.4,451.1" fill="none" stroke="#d4cc20" stroke-width="3.5" stroke-linejoin="round" stroke-linecap="round" opacity="0.82"/>
<path d="M122.8,527.3 C124.4,527.5 129.5,527.7 132.2,528.1 C134.9,528.5 136.9,528.6 139.2,529.7 C141.6,530.7 143.9,532.8 146.2,534.4 C148.6,535.9 150.9,537.5 153.3,539.1 C155.6,540.6 158.0,542.6 160.3,543.8 C162.7,544.9 165.0,545.7 167.3,546.1 C169.7,546.5 172.2,547.0 174.4,546.1 C176.6,545.2 178.4,542.6 180.6,540.6 C182.8,538.7 185.3,536.2 187.7,534.4 C190.0,532.6 192.3,531.2 194.7,529.7 C197.0,528.1 199.4,527.6 201.7,525.0 C204.0,522.4 206.1,517.4 208.4,514.1 C210.7,510.7 213.1,506.1 215.5,504.7 C217.8,503.3 220.2,505.3 222.5,505.5 C224.8,505.6 227.2,505.3 229.5,505.5 C231.9,505.6 234.2,505.6 236.6,506.2 C238.9,506.9 241.1,508.2 243.4,509.4 C245.8,510.5 248.1,511.2 250.5,513.3 C252.8,515.4 255.2,519.4 257.5,521.9 C259.8,524.3 262.2,526.2 264.5,528.1 C266.9,530.1 269.2,532.7 271.6,533.6 C273.9,534.5 276.2,532.9 278.6,533.6 C280.9,534.2 283.3,536.1 285.6,537.5 C288.0,538.9 290.3,541.5 292.7,542.2 C295.0,542.8 297.3,541.9 299.7,541.4 C302.0,540.9 304.2,540.1 306.7,539.1 C309.3,538.0 312.7,535.6 315.0,535.2 C317.3,534.7 318.4,535.7 320.5,536.2 C322.6,536.8 325.2,538.1 327.5,538.8 C329.8,539.4 331.0,539.7 334.5,540.0 C338.0,540.3 343.8,540.8 348.5,540.6 C353.2,540.4 359.0,539.7 362.5,538.8 C366.0,537.8 366.2,536.9 369.5,535.0 C372.8,533.1 379.2,530.4 382.5,527.5 C385.8,524.6 387.2,521.0 389.5,517.5 C391.8,514.0 394.2,509.0 396.5,506.2 C398.8,503.5 401.2,502.5 403.5,501.2 C405.8,500.0 408.2,499.3 410.5,498.8 C412.8,498.2 415.2,497.3 417.5,497.8 C419.8,498.2 422.2,500.4 424.5,501.2 C426.8,502.1 429.2,502.7 431.5,503.1 C433.8,503.5 436.2,504.0 438.5,503.8 C440.8,503.5 443.2,502.3 445.5,501.9 C447.8,501.5 450.2,501.7 452.5,501.2 C454.8,500.8 457.2,500.8 459.5,499.4 C461.8,497.9 464.2,494.4 466.5,492.5 C468.8,490.6 469.9,489.6 473.4,487.7 C476.9,485.8 482.6,485.1 487.3,481.0 C491.9,476.9 496.6,467.6 501.3,463.1 C506.0,458.7 511.9,456.8 515.4,454.2 C519.0,451.6 520.3,450.1 522.6,447.5 C524.9,444.9 525.8,443.8 529.3,438.5 C532.7,433.3 538.4,423.3 543.1,416.2 C547.9,409.1 554.1,400.6 557.7,396.1 C561.2,391.6 562.3,390.9 564.6,389.4 C566.9,387.9 569.2,386.8 571.3,387.2 C573.4,387.5 575.1,393.1 577.3,391.6 C579.6,390.1 582.3,382.3 584.7,378.2 C587.1,374.1 589.5,369.8 591.8,367.0 C594.2,364.2 596.3,362.6 598.5,361.5 C600.8,360.3 601.8,359.6 605.3,359.9 C608.7,360.2 615.7,361.5 619.2,363.1 C622.7,364.7 623.8,367.3 626.2,369.5 C628.6,371.6 631.1,373.9 633.5,375.9 C635.9,377.8 638.2,378.2 640.5,381.2 C642.8,384.2 645.0,389.7 647.3,394.0 C649.6,398.3 652.1,401.8 654.4,406.8 C656.7,411.8 658.9,418.9 661.2,423.9 C663.5,428.9 665.9,432.1 668.2,436.7 C670.6,441.3 672.9,447.0 675.3,451.6 C677.7,456.2 680.2,460.5 682.5,464.4 C684.9,468.3 687.1,471.5 689.4,475.1 C691.7,478.6 694.1,482.5 696.4,485.7 C698.8,489.0 701.1,491.8 703.4,494.3 C705.8,496.8 708.0,499.1 710.3,500.7 C712.6,502.3 715.0,503.2 717.3,503.9 C719.6,504.5 721.8,504.5 724.1,504.5 C726.5,504.5 728.8,503.8 731.2,503.9 C733.6,504.0 736.0,505.1 738.4,505.0 C740.8,504.8 743.3,505.1 745.6,503.1 C747.9,501.1 749.9,498.1 752.1,493.2 C754.4,488.2 756.9,478.9 759.2,473.2 C761.6,467.6 762.6,462.4 766.1,459.0 C769.5,455.7 775.2,453.8 779.7,453.3 C784.3,452.9 789.9,455.0 793.4,456.2 C796.8,457.4 797.0,459.5 800.5,460.5 C804.0,461.4 809.8,463.3 814.4,461.9 C819.0,460.5 823.4,454.5 828.0,451.9 C832.7,449.3 838.7,448.1 842.3,446.2 C845.8,444.3 848.2,441.5 849.4,440.6" fill="none" stroke="#1cc4d0" stroke-width="3.3" stroke-linejoin="round" stroke-linecap="round" opacity="0.82"/>
<path d="M122.8,531.2 C124.4,531.4 128.3,530.2 132.2,532.0 C136.1,533.9 141.6,538.9 146.2,542.2 C150.9,545.4 155.6,550.0 160.3,551.6 C165.0,553.1 169.8,554.9 174.4,551.6 C178.9,548.2 183.1,537.8 187.7,531.2 C192.2,524.7 198.3,518.5 201.7,512.5 C205.2,506.5 206.1,499.3 208.4,495.3 C210.7,491.3 213.1,488.3 215.5,488.3 C217.8,488.3 220.2,493.1 222.5,495.3 C224.8,497.5 227.2,500.0 229.5,501.6 C231.9,503.1 234.2,502.9 236.6,504.7 C238.9,506.5 241.1,510.2 243.4,512.5 C245.8,514.8 248.1,515.0 250.5,518.8 C252.8,522.5 255.2,531.4 257.5,535.2 C259.8,538.9 262.2,540.0 264.5,541.4 C266.9,542.8 269.2,544.0 271.6,543.8 C273.9,543.5 276.2,539.8 278.6,539.8 C280.9,539.8 283.3,542.1 285.6,543.8 C288.0,545.4 290.3,550.0 292.7,550.0 C295.0,550.0 297.3,545.6 299.7,543.8 C302.0,541.9 304.2,540.6 306.7,539.1 C309.3,537.5 312.7,535.1 315.0,534.4 C317.3,533.7 318.4,534.3 320.5,535.0 C322.6,535.7 325.2,537.7 327.5,538.8 C329.8,539.8 331.0,541.0 334.5,541.5 C338.0,542.0 343.8,542.0 348.5,541.5 C353.2,541.0 359.0,540.2 362.5,538.8 C366.0,537.2 367.3,534.4 369.5,532.5 C371.7,530.6 373.3,529.4 375.5,527.5 C377.7,525.6 380.2,524.2 382.5,521.2 C384.8,518.3 387.2,514.8 389.5,510.0 C391.8,505.2 394.2,496.1 396.5,492.5 C398.8,488.9 401.2,488.8 403.5,488.1 C405.8,487.5 408.2,488.1 410.5,488.8 C412.8,489.4 415.2,490.2 417.5,491.9 C419.8,493.5 422.2,497.0 424.5,498.8 C426.8,500.5 429.2,501.6 431.5,502.5 C433.8,503.4 436.2,504.6 438.5,504.4 C440.8,504.2 443.2,501.8 445.5,501.2 C447.8,500.7 450.2,501.7 452.5,501.2 C454.8,500.8 457.2,500.2 459.5,498.8 C461.8,497.3 464.2,495.8 466.5,492.5 C468.8,489.2 471.1,481.4 473.4,478.8 C475.8,476.1 478.2,478.0 480.6,476.5 C482.9,475.0 483.8,474.7 487.3,469.8 C490.7,465.0 497.9,451.6 501.3,447.5 C504.8,443.4 505.7,445.6 508.0,445.3 C510.4,444.9 513.0,446.4 515.4,445.3 C517.8,444.1 520.3,441.9 522.6,438.5 C524.9,435.2 527.0,430.4 529.3,425.1 C531.6,419.9 534.1,412.5 536.4,407.3 C538.7,402.0 540.8,398.0 543.1,393.9 C545.5,389.8 548.1,385.7 550.5,382.7 C552.9,379.7 555.3,377.8 557.7,376.0 C560.0,374.1 562.3,371.7 564.6,371.5 C566.9,371.3 569.2,372.6 571.3,374.9 C573.4,377.1 575.1,386.2 577.3,384.9 C579.6,383.6 582.3,372.6 584.7,367.0 C587.1,361.5 589.5,354.5 591.8,351.4 C594.2,348.3 596.3,348.7 598.5,348.7 C600.8,348.7 601.8,349.9 605.3,351.4 C608.7,352.9 615.7,355.1 619.2,357.7 C622.7,360.4 623.8,363.1 626.2,367.3 C628.6,371.6 631.1,378.9 633.5,383.3 C635.9,387.8 638.2,389.4 640.5,394.0 C642.8,398.6 645.0,405.7 647.3,411.1 C649.6,416.4 652.1,419.3 654.4,426.0 C656.7,432.8 658.9,445.2 661.2,451.6 C663.5,458.0 665.9,460.5 668.2,464.4 C670.6,468.3 672.9,471.5 675.3,475.1 C677.7,478.6 680.2,482.5 682.5,485.7 C684.9,489.0 687.1,491.4 689.4,494.3 C691.7,497.1 694.1,500.2 696.4,502.8 C698.8,505.5 701.1,508.2 703.4,510.3 C705.8,512.4 708.0,514.4 710.3,515.6 C712.6,516.9 715.0,518.1 717.3,517.8 C719.6,517.4 721.8,514.7 724.1,513.5 C726.5,512.2 728.8,511.0 731.2,510.3 C733.6,509.6 736.0,510.4 738.4,509.2 C740.8,508.0 743.3,507.2 745.6,503.1 C747.9,499.0 749.9,492.9 752.1,484.6 C754.4,476.3 756.9,461.2 759.2,453.3 C761.6,445.5 763.8,440.8 766.1,437.7 C768.3,434.6 770.3,434.9 772.6,434.9 C774.9,434.9 776.3,435.3 779.7,437.7 C783.2,440.1 789.9,446.0 793.4,449.1 C796.8,452.2 797.0,453.8 800.5,456.2 C804.0,458.6 811.0,462.8 814.4,463.3 C817.8,463.8 818.7,461.2 820.9,459.0 C823.2,456.9 825.7,452.9 828.0,450.5 C830.4,448.1 832.8,446.7 835.2,444.8 C837.5,442.9 839.9,440.8 842.3,439.1 C844.6,437.5 848.2,435.6 849.4,434.9" fill="none" stroke="#c02ab8" stroke-width="3.3" stroke-linejoin="round" stroke-linecap="round" opacity="0.82"/>
<line x1="125.5" y1="528" x2="125.5" y2="545" stroke="#8c8c8c" stroke-width="1"/>
<rect x="123" y="542" width="5" height="1" fill="#f25048"/>
<line x1="132.5" y1="528" x2="132.5" y2="529" stroke="#8c8c8c" stroke-width="1"/>
<line x1="132.5" y1="543" x2="132.5" y2="549" stroke="#8c8c8c" stroke-width="1"/>
<rect x="130.5" y="529.5" width="4" height="13" fill="none" stroke="#a8e040" stroke-width="1"/>
<line x1="139.5" y1="529" x2="139.5" y2="543" stroke="#8c8c8c" stroke-width="1"/>
<rect x="137" y="535" width="5" height="8" fill="#f25048"/>
<line x1="146.5" y1="538" x2="146.5" y2="550" stroke="#8c8c8c" stroke-width="1"/>
<rect x="144" y="542" width="5" height="8" fill="#f25048"/>
<line x1="153.5" y1="542" x2="153.5" y2="557" stroke="#8c8c8c" stroke-width="1"/>
<rect x="151" y="542" width="5" height="15" fill="#f25048"/>
<line x1="160.5" y1="548" x2="160.5" y2="570" stroke="#8c8c8c" stroke-width="1"/>
<rect x="158" y="556" width="5" height="1" fill="#a8e040"/>
<line x1="167.5" y1="545" x2="167.5" y2="563" stroke="#8c8c8c" stroke-width="1"/>
<rect x="165" y="556" width="5" height="1" fill="#a8e040"/>
<rect x="172.5" y="548.5" width="4" height="8" fill="none" stroke="#a8e040" stroke-width="1"/>
<line x1="181.5" y1="521" x2="181.5" y2="528" stroke="#8c8c8c" stroke-width="1"/>
<line x1="181.5" y1="543" x2="181.5" y2="549" stroke="#8c8c8c" stroke-width="1"/>
<rect x="179.5" y="528.5" width="4" height="14" fill="none" stroke="#a8e040" stroke-width="1"/>
<line x1="188.5" y1="508" x2="188.5" y2="514" stroke="#8c8c8c" stroke-width="1"/>
<line x1="188.5" y1="523" x2="188.5" y2="526" stroke="#8c8c8c" stroke-width="1"/>
<rect x="186.5" y="514.5" width="4" height="8" fill="none" stroke="#a8e040" stroke-width="1"/>
<line x1="195.5" y1="501" x2="195.5" y2="529" stroke="#8c8c8c" stroke-width="1"/>
<rect x="193" y="501" width="5" height="14" fill="#8cc84b"/>
<line x1="202.5" y1="491" x2="202.5" y2="494" stroke="#8c8c8c" stroke-width="1"/>
<rect x="200.5" y="494.5" width="4" height="20" fill="none" stroke="#a8e040" stroke-width="1"/>
<line x1="209.5" y1="460" x2="209.5" y2="467" stroke="#8c8c8c" stroke-width="1"/>
<line x1="209.5" y1="515" x2="209.5" y2="529" stroke="#8c8c8c" stroke-width="1"/>
<rect x="207.5" y="467.5" width="4" height="47" fill="none" stroke="#a8e040" stroke-width="1"/>
<line x1="216.5" y1="460" x2="216.5" y2="488" stroke="#8c8c8c" stroke-width="1"/>
<rect x="214" y="467" width="5" height="15" fill="#f25048"/>
<line x1="223.5" y1="487" x2="223.5" y2="510" stroke="#8c8c8c" stroke-width="1"/>
<rect x="221" y="487" width="5" height="23" fill="#f25048"/>
<line x1="230.5" y1="494" x2="230.5" y2="515" stroke="#8c8c8c" stroke-width="1"/>
<rect x="228" y="508" width="5" height="1" fill="#a8e040"/>
<line x1="237.5" y1="487" x2="237.5" y2="510" stroke="#8c8c8c" stroke-width="1"/>
<rect x="235" y="494" width="5" height="16" fill="#8cc84b"/>
<line x1="244.5" y1="508" x2="244.5" y2="523" stroke="#8c8c8c" stroke-width="1"/>
<rect x="242" y="514" width="5" height="9" fill="#f25048"/>
<line x1="251.5" y1="521" x2="251.5" y2="543" stroke="#8c8c8c" stroke-width="1"/>
<rect x="249" y="521" width="5" height="9" fill="#f25048"/>
<line x1="258.5" y1="535" x2="258.5" y2="557" stroke="#8c8c8c" stroke-width="1"/>
<rect x="256" y="535" width="5" height="22" fill="#f25048"/>
<line x1="265.5" y1="542" x2="265.5" y2="556" stroke="#8c8c8c" stroke-width="1"/>
<rect x="263" y="548" width="5" height="1" fill="#a8e040"/>
<line x1="272.5" y1="542" x2="272.5" y2="570" stroke="#8c8c8c" stroke-width="1"/>
<rect x="270" y="548" width="5" height="1" fill="#a8e040"/>
<line x1="279.5" y1="543" x2="279.5" y2="549" stroke="#8c8c8c" stroke-width="1"/>
<rect x="277.5" y="535.5" width="4" height="7" fill="none" stroke="#a8e040" stroke-width="1"/>
<line x1="286.5" y1="542" x2="286.5" y2="556" stroke="#8c8c8c" stroke-width="1"/>
<rect x="284" y="548" width="5" height="1" fill="#f25048"/>
<line x1="292.5" y1="548" x2="292.5" y2="566" stroke="#8c8c8c" stroke-width="1"/>
<rect x="290" y="548" width="5" height="15" fill="#f25048"/>
<line x1="299.5" y1="521" x2="299.5" y2="535" stroke="#8c8c8c" stroke-width="1"/>
<line x1="299.5" y1="550" x2="299.5" y2="556" stroke="#8c8c8c" stroke-width="1"/>
<rect x="297.5" y="535.5" width="4" height="14" fill="none" stroke="#a8e040" stroke-width="1"/>
<line x1="306.5" y1="521" x2="306.5" y2="541" stroke="#8c8c8c" stroke-width="1"/>
<rect x="304" y="528" width="5" height="8" fill="#8cc84b"/>
<rect x="311.5" y="521.5" width="4" height="11" fill="none" stroke="#a8e040" stroke-width="1"/>
<line x1="320.5" y1="521" x2="320.5" y2="534" stroke="#8c8c8c" stroke-width="1"/>
<rect x="318" y="528" width="5" height="6" fill="#f25048"/>
<line x1="327.5" y1="528" x2="327.5" y2="550" stroke="#8c8c8c" stroke-width="1"/>
<rect x="325" y="535" width="5" height="15" fill="#f25048"/>
<line x1="334.5" y1="536" x2="334.5" y2="542" stroke="#8c8c8c" stroke-width="1"/>
<rect x="332.5" y="542.5" width="4" height="6" fill="none" stroke="#a8e040" stroke-width="1"/>
<line x1="341.5" y1="536" x2="341.5" y2="543" stroke="#8c8c8c" stroke-width="1"/>
<rect x="339" y="542" width="5" height="1" fill="#a8e040"/>
<line x1="348.5" y1="528" x2="348.5" y2="543" stroke="#8c8c8c" stroke-width="1"/>
<rect x="346" y="536" width="5" height="7" fill="#8cc84b"/>
<line x1="355.5" y1="528" x2="355.5" y2="543" stroke="#8c8c8c" stroke-width="1"/>
<rect x="353" y="536" width="5" height="7" fill="#8cc84b"/>
<line x1="362.5" y1="528" x2="362.5" y2="536" stroke="#8c8c8c" stroke-width="1"/>
<rect x="360.5" y="536.5" width="4" height="6" fill="none" stroke="#a8e040" stroke-width="1"/>
<line x1="369.5" y1="514" x2="369.5" y2="521" stroke="#8c8c8c" stroke-width="1"/>
<rect x="367.5" y="521.5" width="4" height="7" fill="none" stroke="#a8e040" stroke-width="1"/>
<line x1="376.5" y1="514" x2="376.5" y2="529" stroke="#8c8c8c" stroke-width="1"/>
<rect x="374" y="521" width="5" height="8" fill="#f25048"/>
<line x1="383.5" y1="501" x2="383.5" y2="508" stroke="#8c8c8c" stroke-width="1"/>
<rect x="381.5" y="508.5" width="4" height="13" fill="none" stroke="#a8e040" stroke-width="1"/>
<line x1="390.5" y1="480" x2="390.5" y2="494" stroke="#8c8c8c" stroke-width="1"/>
<rect x="388.5" y="494.5" width="4" height="14" fill="none" stroke="#a8e040" stroke-width="1"/>
<line x1="397.5" y1="460" x2="397.5" y2="467" stroke="#8c8c8c" stroke-width="1"/>
<line x1="397.5" y1="482" x2="397.5" y2="488" stroke="#8c8c8c" stroke-width="1"/>
<rect x="395.5" y="467.5" width="4" height="14" fill="none" stroke="#a8e040" stroke-width="1"/>
<line x1="404.5" y1="460" x2="404.5" y2="488" stroke="#8c8c8c" stroke-width="1"/>
<rect x="402" y="460" width="5" height="22" fill="#f25048"/>
<line x1="411.5" y1="474" x2="411.5" y2="498" stroke="#8c8c8c" stroke-width="1"/>
<rect x="409" y="480" width="5" height="9" fill="#f25048"/>
<line x1="418.5" y1="474" x2="418.5" y2="495" stroke="#8c8c8c" stroke-width="1"/>
<rect x="416" y="494" width="5" height="1" fill="#f25048"/>
<line x1="425.5" y1="491" x2="425.5" y2="515" stroke="#8c8c8c" stroke-width="1"/>
<rect x="423" y="494" width="5" height="15" fill="#f25048"/>
<line x1="432.5" y1="494" x2="432.5" y2="512" stroke="#8c8c8c" stroke-width="1"/>
<rect x="430" y="501" width="5" height="8" fill="#8cc84b"/>
<line x1="439.5" y1="494" x2="439.5" y2="512" stroke="#8c8c8c" stroke-width="1"/>
<rect x="437" y="508" width="5" height="1" fill="#a8e040"/>
<line x1="446.5" y1="487" x2="446.5" y2="494" stroke="#8c8c8c" stroke-width="1"/>
<rect x="444.5" y="494.5" width="4" height="14" fill="none" stroke="#a8e040" stroke-width="1"/>
<line x1="453.5" y1="494" x2="453.5" y2="515" stroke="#8c8c8c" stroke-width="1"/>
<rect x="451" y="501" width="5" height="1" fill="#a8e040"/>
<line x1="460.5" y1="487" x2="460.5" y2="494" stroke="#8c8c8c" stroke-width="1"/>
<line x1="460.5" y1="509" x2="460.5" y2="515" stroke="#8c8c8c" stroke-width="1"/>
<rect x="458.5" y="494.5" width="4" height="14" fill="none" stroke="#a8e040" stroke-width="1"/>
<rect x="465.5" y="480.5" width="4" height="8" fill="none" stroke="#a8e040" stroke-width="1"/>
<line x1="474.5" y1="453" x2="474.5" y2="460" stroke="#8c8c8c" stroke-width="1"/>
<line x1="474.5" y1="475" x2="474.5" y2="480" stroke="#8c8c8c" stroke-width="1"/>
<rect x="472.5" y="460.5" width="4" height="14" fill="none" stroke="#a8e040" stroke-width="1"/>
<line x1="481.5" y1="460" x2="481.5" y2="475" stroke="#8c8c8c" stroke-width="1"/>
<rect x="479" y="460" width="5" height="15" fill="#f25048"/>
<line x1="488.5" y1="481" x2="488.5" y2="488" stroke="#8c8c8c" stroke-width="1"/>
<rect x="486.5" y="460.5" width="4" height="20" fill="none" stroke="#a8e040" stroke-width="1"/>
<line x1="494.5" y1="440" x2="494.5" y2="455" stroke="#8c8c8c" stroke-width="1"/>
<rect x="492" y="440" width="5" height="15" fill="#8cc84b"/>
<line x1="501.5" y1="412" x2="501.5" y2="427" stroke="#8c8c8c" stroke-width="1"/>
<line x1="501.5" y1="447" x2="501.5" y2="461" stroke="#8c8c8c" stroke-width="1"/>
<rect x="499.5" y="427.5" width="4" height="19" fill="none" stroke="#a8e040" stroke-width="1"/>
<line x1="508.5" y1="427" x2="508.5" y2="446" stroke="#8c8c8c" stroke-width="1"/>
<rect x="506" y="427" width="5" height="14" fill="#f25048"/>
<line x1="515.5" y1="434" x2="515.5" y2="453" stroke="#8c8c8c" stroke-width="1"/>
<rect x="513" y="440" width="5" height="7" fill="#f25048"/>
<rect x="520.5" y="427.5" width="4" height="19" fill="none" stroke="#a8e040" stroke-width="1"/>
<line x1="529.5" y1="433" x2="529.5" y2="435" stroke="#8c8c8c" stroke-width="1"/>
<rect x="527.5" y="406.5" width="4" height="26" fill="none" stroke="#a8e040" stroke-width="1"/>
<line x1="536.5" y1="385" x2="536.5" y2="393" stroke="#8c8c8c" stroke-width="1"/>
<line x1="536.5" y1="400" x2="536.5" y2="418" stroke="#8c8c8c" stroke-width="1"/>
<rect x="534.5" y="393.5" width="4" height="6" fill="none" stroke="#a8e040" stroke-width="1"/>
<line x1="543.5" y1="355" x2="543.5" y2="373" stroke="#8c8c8c" stroke-width="1"/>
<rect x="541.5" y="373.5" width="4" height="19" fill="none" stroke="#a8e040" stroke-width="1"/>
<line x1="550.5" y1="358" x2="550.5" y2="384" stroke="#8c8c8c" stroke-width="1"/>
<rect x="548" y="358" width="5" height="8" fill="#8cc84b"/>
<line x1="557.5" y1="351" x2="557.5" y2="378" stroke="#8c8c8c" stroke-width="1"/>
<rect x="555" y="365" width="5" height="1" fill="#a8e040"/>
<line x1="571.5" y1="325" x2="571.5" y2="406" stroke="#8c8c8c" stroke-width="1"/>
<rect x="569" y="338" width="5" height="41" fill="#f25048"/>
<line x1="578.5" y1="385" x2="578.5" y2="426" stroke="#8c8c8c" stroke-width="1"/>
<rect x="576" y="393" width="5" height="14" fill="#f25048"/>
<line x1="585.5" y1="317" x2="585.5" y2="325" stroke="#8c8c8c" stroke-width="1"/>
<line x1="585.5" y1="400" x2="585.5" y2="406" stroke="#8c8c8c" stroke-width="1"/>
<rect x="583.5" y="325.5" width="4" height="74" fill="none" stroke="#a8e040" stroke-width="1"/>
<line x1="592.5" y1="310" x2="592.5" y2="352" stroke="#8c8c8c" stroke-width="1"/>
<rect x="590" y="325" width="5" height="14" fill="#f25048"/>
<line x1="599.5" y1="325" x2="599.5" y2="353" stroke="#8c8c8c" stroke-width="1"/>
<rect x="597" y="345" width="5" height="1" fill="#f25048"/>
<line x1="606.5" y1="331" x2="606.5" y2="359" stroke="#8c8c8c" stroke-width="1"/>
<rect x="604" y="338" width="5" height="14" fill="#f25048"/>
<line x1="613.5" y1="349" x2="613.5" y2="373" stroke="#8c8c8c" stroke-width="1"/>
<rect x="611" y="358" width="5" height="8" fill="#f25048"/>
<line x1="620.5" y1="365" x2="620.5" y2="366" stroke="#8c8c8c" stroke-width="1"/>
<rect x="618" y="365" width="5" height="1" fill="#a8e040"/>
<line x1="627.5" y1="387" x2="627.5" y2="406" stroke="#8c8c8c" stroke-width="1"/>
<rect x="625.5" y="378.5" width="4" height="8" fill="none" stroke="#f25048" stroke-width="1"/>
<line x1="634.5" y1="385" x2="634.5" y2="419" stroke="#8c8c8c" stroke-width="1"/>
<rect x="632" y="385" width="5" height="22" fill="#f25048"/>
<line x1="641.5" y1="414" x2="641.5" y2="419" stroke="#8c8c8c" stroke-width="1"/>
<rect x="639.5" y="406.5" width="4" height="7" fill="none" stroke="#a8e040" stroke-width="1"/>
<line x1="648.5" y1="406" x2="648.5" y2="435" stroke="#8c8c8c" stroke-width="1"/>
<rect x="646" y="406" width="5" height="29" fill="#f25048"/>
<line x1="655.5" y1="434" x2="655.5" y2="448" stroke="#8c8c8c" stroke-width="1"/>
<rect x="653" y="434" width="5" height="14" fill="#f25048"/>
<line x1="662.5" y1="446" x2="662.5" y2="495" stroke="#8c8c8c" stroke-width="1"/>
<rect x="660" y="446" width="5" height="43" fill="#f25048"/>
<line x1="669.5" y1="468" x2="669.5" y2="480" stroke="#8c8c8c" stroke-width="1"/>
<line x1="669.5" y1="489" x2="669.5" y2="495" stroke="#8c8c8c" stroke-width="1"/>
<rect x="667.5" y="480.5" width="4" height="8" fill="none" stroke="#a8e040" stroke-width="1"/>
<line x1="676.5" y1="480" x2="676.5" y2="504" stroke="#8c8c8c" stroke-width="1"/>
<rect x="674" y="488" width="5" height="1" fill="#f25048"/>
<line x1="683.5" y1="488" x2="683.5" y2="515" stroke="#8c8c8c" stroke-width="1"/>
<rect x="681" y="494" width="5" height="16" fill="#f25048"/>
<line x1="690.5" y1="494" x2="690.5" y2="510" stroke="#8c8c8c" stroke-width="1"/>
<rect x="688" y="501" width="5" height="9" fill="#8cc84b"/>
<line x1="697.5" y1="488" x2="697.5" y2="515" stroke="#8c8c8c" stroke-width="1"/>
<rect x="695" y="494" width="5" height="21" fill="#f25048"/>
<line x1="703.5" y1="501" x2="703.5" y2="521" stroke="#8c8c8c" stroke-width="1"/>
<rect x="701" y="514" width="5" height="1" fill="#a8e040"/>
<line x1="710.5" y1="514" x2="710.5" y2="529" stroke="#8c8c8c" stroke-width="1"/>
<rect x="708" y="514" width="5" height="15" fill="#f25048"/>
<line x1="717.5" y1="529" x2="717.5" y2="531" stroke="#8c8c8c" stroke-width="1"/>
<rect x="715.5" y="521.5" width="4" height="7" fill="none" stroke="#a8e040" stroke-width="1"/>
<line x1="724.5" y1="501" x2="724.5" y2="508" stroke="#8c8c8c" stroke-width="1"/>
<line x1="724.5" y1="515" x2="724.5" y2="517" stroke="#8c8c8c" stroke-width="1"/>
<rect x="722.5" y="508.5" width="4" height="6" fill="none" stroke="#a8e040" stroke-width="1"/>
<line x1="731.5" y1="494" x2="731.5" y2="502" stroke="#8c8c8c" stroke-width="1"/>
<rect x="729.5" y="502.5" width="4" height="6" fill="none" stroke="#a8e040" stroke-width="1"/>
<line x1="738.5" y1="488" x2="738.5" y2="515" stroke="#8c8c8c" stroke-width="1"/>
<rect x="736" y="494" width="5" height="21" fill="#f25048"/>
<line x1="745.5" y1="479" x2="745.5" y2="494" stroke="#8c8c8c" stroke-width="1"/>
<line x1="745.5" y1="502" x2="745.5" y2="515" stroke="#8c8c8c" stroke-width="1"/>
<rect x="743.5" y="494.5" width="4" height="7" fill="none" stroke="#a8e040" stroke-width="1"/>
<line x1="752.5" y1="460" x2="752.5" y2="468" stroke="#8c8c8c" stroke-width="1"/>
<rect x="750.5" y="468.5" width="4" height="20" fill="none" stroke="#a8e040" stroke-width="1"/>
<line x1="759.5" y1="454" x2="759.5" y2="460" stroke="#8c8c8c" stroke-width="1"/>
<rect x="757.5" y="426.5" width="4" height="27" fill="none" stroke="#a8e040" stroke-width="1"/>
<line x1="766.5" y1="405" x2="766.5" y2="412" stroke="#8c8c8c" stroke-width="1"/>
<rect x="764.5" y="412.5" width="4" height="14" fill="none" stroke="#a8e040" stroke-width="1"/>
<line x1="773.5" y1="402" x2="773.5" y2="429" stroke="#8c8c8c" stroke-width="1"/>
<rect x="771" y="406" width="5" height="21" fill="#f25048"/>
<line x1="780.5" y1="419" x2="780.5" y2="446" stroke="#8c8c8c" stroke-width="1"/>
<rect x="778" y="426" width="5" height="15" fill="#f25048"/>
<line x1="787.5" y1="419" x2="787.5" y2="447" stroke="#8c8c8c" stroke-width="1"/>
<rect x="785" y="433" width="5" height="14" fill="#f25048"/>
<line x1="794.5" y1="426" x2="794.5" y2="450" stroke="#8c8c8c" stroke-width="1"/>
<rect x="792" y="433" width="5" height="17" fill="#f25048"/>
<line x1="801.5" y1="446" x2="801.5" y2="476" stroke="#8c8c8c" stroke-width="1"/>
<rect x="799" y="453" width="5" height="23" fill="#f25048"/>
<line x1="808.5" y1="453" x2="808.5" y2="466" stroke="#8c8c8c" stroke-width="1"/>
<rect x="806" y="459" width="5" height="1" fill="#a8e040"/>
<line x1="815.5" y1="459" x2="815.5" y2="484" stroke="#8c8c8c" stroke-width="1"/>
<rect x="813" y="466" width="5" height="10" fill="#f25048"/>
<rect x="820.5" y="446.5" width="4" height="29" fill="none" stroke="#a8e040" stroke-width="1"/>
<line x1="829.5" y1="426" x2="829.5" y2="433" stroke="#8c8c8c" stroke-width="1"/>
<line x1="829.5" y1="447" x2="829.5" y2="454" stroke="#8c8c8c" stroke-width="1"/>
<rect x="827.5" y="433.5" width="4" height="13" fill="none" stroke="#a8e040" stroke-width="1"/>
<line x1="836.5" y1="426" x2="836.5" y2="434" stroke="#8c8c8c" stroke-width="1"/>
<rect x="834" y="426" width="5" height="7" fill="#8cc84b"/>
<line x1="843.5" y1="434" x2="843.5" y2="440" stroke="#8c8c8c" stroke-width="1"/>
<rect x="841.5" y="426.5" width="4" height="7" fill="none" stroke="#a8e040" stroke-width="1"/>
<line x1="850.5" y1="426" x2="850.5" y2="446" stroke="#8c8c8c" stroke-width="1"/>
<rect x="848" y="433" width="5" height="1" fill="#a8e040"/>
<polyline points="717.3,531.7 738.4,488.0 745.3,514.4 772.6,403.3 814.4,483.3 884.3,293.5" fill="none" stroke="#e8e8c8" stroke-width="1"/>
<circle cx="717.3" cy="531.7" r="1.6" fill="none" stroke="#ddd" stroke-width="1"/>
<circle cx="738.4" cy="488" r="1.6" fill="none" stroke="#ddd" stroke-width="1"/>
<circle cx="745.3" cy="514.4" r="1.6" fill="none" stroke="#ddd" stroke-width="1"/>
<circle cx="772.6" cy="403.3" r="1.6" fill="none" stroke="#ddd" stroke-width="1"/>
<circle cx="814.4" cy="483.3" r="1.6" fill="none" stroke="#ddd" stroke-width="1"/>
<circle cx="884.3" cy="293.5" r="1.6" fill="none" stroke="#ddd" stroke-width="1"/>
<text x="739" y="480" text-anchor="middle" font-size="20" fill="#fff" fill-opacity="0.85" font-family="Liberation Sans">(1)</text>
<text x="746" y="541" text-anchor="middle" font-size="20" fill="#fff" fill-opacity="0.85" font-family="Liberation Sans">(2)</text>
<text x="773" y="395" text-anchor="middle" font-size="20" fill="#fff" fill-opacity="0.85" font-family="Liberation Sans">(3)</text>
<text x="815" y="510" text-anchor="middle" font-size="20" fill="#fff" fill-opacity="0.85" font-family="Liberation Sans">(4)</text>
<text x="885" y="284" text-anchor="middle" font-size="20" fill="#fff" fill-opacity="0.85" font-family="Liberation Sans">(5)</text>
<text x="1114" y="260.5" font-size="11.2" fill="#c4c4c4" font-weight="bold" font-family="Liberation Sans">40.00</text>
<text x="1114" y="295.0" font-size="11.2" fill="#c4c4c4" font-weight="bold" font-family="Liberation Sans">37.50</text>
<text x="1114" y="329.0" font-size="11.2" fill="#c4c4c4" font-weight="bold" font-family="Liberation Sans">35.00</text>
<text x="1114" y="363.0" font-size="11.2" fill="#c4c4c4" font-weight="bold" font-family="Liberation Sans">32.50</text>
<text x="1114" y="397.0" font-size="11.2" fill="#c4c4c4" font-weight="bold" font-family="Liberation Sans">30.00</text>
<text x="1114" y="431.0" font-size="11.2" fill="#c4c4c4" font-weight="bold" font-family="Liberation Sans">27.50</text>
<text x="1114" y="465.0" font-size="11.2" fill="#c4c4c4" font-weight="bold" font-family="Liberation Sans">25.00</text>
<text x="1114" y="499.0" font-size="11.2" fill="#c4c4c4" font-weight="bold" font-family="Liberation Sans">22.50</text>
<text x="1114" y="533.0" font-size="11.2" fill="#c4c4c4" font-weight="bold" font-family="Liberation Sans">20.00</text>
<text x="1114" y="567.0" font-size="11.2" fill="#c4c4c4" font-weight="bold" font-family="Liberation Sans">17.50</text>
<text x="1114" y="601.0" font-size="11.2" fill="#c4c4c4" font-weight="bold" font-family="Liberation Sans">15.00</text>
<text x="1114" y="635.0" font-size="11.2" fill="#c4c4c4" font-weight="bold" font-family="Liberation Sans">12.50</text>
<rect x="1107.5" y="426" width="38.5" height="15.5" fill="#ee5555"/>
<text x="1127" y="438" text-anchor="middle" font-size="12" fill="#fff" font-weight="bold" font-family="Liberation Sans">27.00</text>
<rect x="120.5" y="239.5" width="12" height="12" fill="none" stroke="#aaa" stroke-width="1"/>
<line x1="122.5" y1="245.5" x2="130.5" y2="245.5" stroke="#aaa"/><line x1="126.5" y1="241.5" x2="126.5" y2="249.5" stroke="#aaa"/>
<text x="139" y="251.5" font-size="14.8" fill="#aaa" font-family="Liberation Sans">O</text>
<text x="152.5" y="251.5" font-size="14.8" fill="#e84a40" font-family="Liberation Sans">27.00</text>
<text x="199" y="251.5" font-size="14.8" fill="#aaa" font-family="Liberation Sans">H</text>
<text x="212" y="251.5" font-size="14.8" fill="#e84a40" font-family="Liberation Sans">27.50</text>
<text x="258.5" y="251.5" font-size="14.8" fill="#aaa" font-family="Liberation Sans">L</text>
<text x="268.5" y="251.5" font-size="14.8" fill="#e84a40" font-family="Liberation Sans">26.00</text>
<text x="316" y="251.5" font-size="14.8" fill="#aaa" font-family="Liberation Sans">C</text>
<text x="328.5" y="251.5" font-size="14.8" fill="#e84a40" font-family="Liberation Sans">27.00</text>
<rect x="115" y="651" width="1043" height="1" fill="#555"/>
<line x1="115" y1="671.5" x2="1111" y2="671.5" stroke="#4a4a4a"/>
<text x="1114" y="676.0" font-size="11.2" fill="#c4c4c4" font-weight="bold" font-family="Liberation Sans">2.0000</text>
<line x1="115" y1="707.5" x2="1111" y2="707.5" stroke="#4a4a4a"/>
<text x="1114" y="712.0" font-size="11.2" fill="#c4c4c4" font-weight="bold" font-family="Liberation Sans">0.0000</text>
<line x1="115" y1="743.5" x2="1111" y2="743.5" stroke="#4a4a4a"/>
<text x="1110" y="748.0" font-size="11.2" fill="#c4c4c4" font-weight="bold" font-family="Liberation Sans">-2.0000</text>
<rect x="124.5" y="707.5" width="2.2" height="5.938242280285067" fill="#cc22cc"/>
<rect x="131.5" y="707.5" width="2.2" height="5.938242280284953" fill="#cc22cc"/>
<rect x="138.5" y="707.5" width="2.2" height="5.938242280284953" fill="#cc22cc"/>
<rect x="145.5" y="707.5" width="2.2" height="5.938242280284953" fill="#cc22cc"/>
<rect x="152.5" y="707.5" width="2.2" height="6.5523040380046496" fill="#cc22cc"/>
<rect x="159.5" y="707.5" width="2.2" height="7.2646674584322" fill="#cc22cc"/>
<rect x="166.5" y="707.5" width="2.2" height="6.714608076009426" fill="#cc22cc"/>
<rect x="173.5" y="707.5" width="2.2" height="4.960926365795558" fill="#cc22cc"/>
<rect x="180.5" y="707.5" width="2.2" height="2.434441805225674" fill="#cc22cc"/>
<rect x="187.5" y="706.7" width="2.2" height="0.8" fill="#cc22cc"/>
<rect x="194.5" y="705.3147268408551" width="2.2" height="2.185273159144913" fill="#cc22cc"/>
<rect x="201.5" y="701.2868171021378" width="2.2" height="6.213182897862225" fill="#cc22cc"/>
<rect x="208.5" y="699.215083135392" width="2.2" height="8.284916864608022" fill="#cc22cc"/>
<rect x="215.5" y="698.0112826603325" width="2.2" height="9.48871733966746" fill="#cc22cc"/>
<rect x="222.5" y="699.7242280285036" width="2.2" height="7.775771971496397" fill="#cc22cc"/>
<rect x="229.5" y="701.5669041963579" width="2.2" height="5.933095803642118" fill="#cc22cc"/>
<rect x="236.5" y="704.1335708630246" width="2.2" height="3.3664291369753983" fill="#cc22cc"/>
<rect x="243.5" y="706.5211995249406" width="2.2" height="0.9788004750594155" fill="#cc22cc"/>
<rect x="250.5" y="707.5" width="2.2" height="1.2961995249406755" fill="#cc22cc"/>
<rect x="257.5" y="707.5" width="2.2" height="4.159738717339565" fill="#cc22cc"/>
<rect x="264.5" y="707.5" width="2.2" height="4.970308788598459" fill="#cc22cc"/>
<rect x="271.5" y="707.5" width="2.2" height="4.707165479018158" fill="#cc22cc"/>
<rect x="278.5" y="707.5" width="2.2" height="5.0794932699919855" fill="#cc22cc"/>
<rect x="285.5" y="707.5" width="2.2" height="5.896159936658705" fill="#cc22cc"/>
<rect x="291.5" y="707.5" width="2.2" height="6.67600950118765" fill="#cc22cc"/>
<rect x="298.5" y="707.5" width="2.2" height="4.926840855106889" fill="#cc22cc"/>
<rect x="305.5" y="707.5" width="2.2" height="2.7169239904989126" fill="#cc22cc"/>
<rect x="312.5" y="707.5" width="2.2" height="0.9085906571655187" fill="#cc22cc"/>
<rect x="319.5" y="706.7" width="2.2" height="0.8" fill="#cc22cc"/>
<rect x="326.5" y="706.7" width="2.2" height="0.8" fill="#cc22cc"/>
<rect x="333.5" y="706.7" width="2.2" height="0.8" fill="#cc22cc"/>
<rect x="340.5" y="706.7" width="2.2" height="0.8" fill="#cc22cc"/>
<rect x="347.5" y="707.5" width="2.2" height="0.8" fill="#cc22cc"/>
<rect x="354.5" y="707.5" width="2.2" height="0.8" fill="#cc22cc"/>
<rect x="361.5" y="706.7" width="2.2" height="0.8" fill="#cc22cc"/>
<rect x="368.5" y="706.4057007125891" width="2.2" height="1.0942992874108768" fill="#cc22cc"/>
<rect x="375.5" y="704.8890340459224" width="2.2" height="2.610965954077642" fill="#cc22cc"/>
<rect x="382.5" y="704.1802850356294" width="2.2" height="3.3197149643706325" fill="#cc22cc"/>
<rect x="389.5" y="701.0302850356295" width="2.2" height="6.469714964370496" fill="#cc22cc"/>
<rect x="396.5" y="698.2189231987333" width="2.2" height="9.28107680126675" fill="#cc22cc"/>
<rect x="403.5" y="698.6589865399842" width="2.2" height="8.841013460015802" fill="#cc22cc"/>
<rect x="410.5" y="699.8456057007126" width="2.2" height="7.654394299287446" fill="#cc22cc"/>
<rect x="417.5" y="701.3417656373713" width="2.2" height="6.158234362628718" fill="#cc22cc"/>
<rect x="424.5" y="703.2521773555028" width="2.2" height="4.247822644497205" fill="#cc22cc"/>
<rect x="431.5" y="705.3581947743468" width="2.2" height="2.141805225653229" fill="#cc22cc"/>
<rect x="438.5" y="706.7" width="2.2" height="0.8" fill="#cc22cc"/>
<rect x="445.5" y="706.7" width="2.2" height="0.8" fill="#cc22cc"/>
<rect x="452.5" y="706.7" width="2.2" height="0.8" fill="#cc22cc"/>
<rect x="459.5" y="705.7990894695171" width="2.2" height="1.700910530482929" fill="#cc22cc"/>
<rect x="466.5" y="704.9824228028504" width="2.2" height="2.517577197149649" fill="#cc22cc"/>
<rect x="473.5" y="704.1657561361836" width="2.2" height="3.3342438638163685" fill="#cc22cc"/>
<rect x="480.5" y="703.5308548669594" width="2.2" height="3.96914513304057" fill="#cc22cc"/>
<rect x="487.5" y="703.177319513424" width="2.2" height="4.322680486576019" fill="#cc22cc"/>
<rect x="493.5" y="702.2272288346388" width="2.2" height="5.272771165361178" fill="#cc22cc"/>
<rect x="500.5" y="700.5439257493393" width="2.2" height="6.956074250660663" fill="#cc22cc"/>
<rect x="507.5" y="700.3741092636579" width="2.2" height="7.125890736342058" fill="#cc22cc"/>
<rect x="514.5" y="700.249406175772" width="2.2" height="7.250593824227963" fill="#cc22cc"/>
<rect x="521.5" y="699.7802850356295" width="2.2" height="7.719714964370496" fill="#cc22cc"/>
<rect x="528.5" y="699.1061757719714" width="2.2" height="8.39382422802862" fill="#cc22cc"/>
<rect x="535.5" y="697.8524940617576" width="2.2" height="9.647505938242375" fill="#cc22cc"/>
<rect x="542.5" y="696.7404394299288" width="2.2" height="10.759560570071244" fill="#cc22cc"/>
<rect x="549.5" y="695.7017418844022" width="2.2" height="11.798258115597832" fill="#cc22cc"/>
<rect x="556.5" y="696.5884085510689" width="2.2" height="10.911591448931063" fill="#cc22cc"/>
<rect x="563.5" y="699.0929691211402" width="2.2" height="8.407030878859814" fill="#cc22cc"/>
<rect x="570.5" y="700.3378622327791" width="2.2" height="7.162137767220884" fill="#cc22cc"/>
<rect x="577.5" y="704.9754394299288" width="2.2" height="2.5245605700712304" fill="#cc22cc"/>
<rect x="584.5" y="701.2710213776724" width="2.2" height="6.228978622327645" fill="#cc22cc"/>
<rect x="591.5" y="700.7989707046714" width="2.2" height="6.701029295328567" fill="#cc22cc"/>
<rect x="598.5" y="701.890403800475" width="2.2" height="5.609596199524958" fill="#cc22cc"/>
<rect x="605.5" y="704.2844180522566" width="2.2" height="3.2155819477434306" fill="#cc22cc"/>
<rect x="612.5" y="706.4523950910531" width="2.2" height="1.047604908946937" fill="#cc22cc"/>
<rect x="619.5" y="707.5" width="2.2" height="1.602533650039618" fill="#cc22cc"/>
<rect x="626.5" y="707.5" width="2.2" height="4.67861045130644" fill="#cc22cc"/>
<rect x="633.5" y="707.5" width="2.2" height="8.423610451306445" fill="#cc22cc"/>
<rect x="640.5" y="707.5" width="2.2" height="12.486603325415672" fill="#cc22cc"/>
<rect x="647.5" y="707.5" width="2.2" height="15.002660332541609" fill="#cc22cc"/>
<rect x="654.5" y="707.5" width="2.2" height="18.54952494061763" fill="#cc22cc"/>
<rect x="661.5" y="707.5" width="2.2" height="21.734204275534353" fill="#cc22cc"/>
<rect x="668.5" y="707.5" width="2.2" height="22.998669833729195" fill="#cc22cc"/>
<rect x="675.5" y="707.5" width="2.2" height="23.783634204275472" fill="#cc22cc"/>
<rect x="682.5" y="707.5" width="2.2" height="23.678634204275454" fill="#cc22cc"/>
<rect x="689.5" y="707.5" width="2.2" height="23.270783847980965" fill="#cc22cc"/>
<rect x="696.5" y="707.5" width="2.2" height="22.64078384798097" fill="#cc22cc"/>
<rect x="702.5" y="707.5" width="2.2" height="21.223325415676868" fill="#cc22cc"/>
<rect x="709.5" y="707.5" width="2.2" height="19.332066508313574" fill="#cc22cc"/>
<rect x="716.5" y="707.5" width="2.2" height="16.884204275534444" fill="#cc22cc"/>
<rect x="723.5" y="707.5" width="2.2" height="14.050356294536755" fill="#cc22cc"/>
<rect x="730.5" y="707.5" width="2.2" height="10.052636579572436" fill="#cc22cc"/>
<rect x="737.5" y="707.5" width="2.2" height="7.879049881235119" fill="#cc22cc"/>
<rect x="744.5" y="707.5" width="2.2" height="4.032066508313505" fill="#cc22cc"/>
<rect x="751.5" y="705.7469517022961" width="2.2" height="1.7530482977039128" fill="#cc22cc"/>
<rect x="758.5" y="699.5052850356295" width="2.2" height="7.994714964370473" fill="#cc22cc"/>
<rect x="765.5" y="694.2803642121933" width="2.2" height="13.219635787806737" fill="#cc22cc"/>
<rect x="772.5" y="690.9578384798101" width="2.2" height="16.542161520189893" fill="#cc22cc"/>
<rect x="779.5" y="692.7078384798101" width="2.2" height="14.792161520189893" fill="#cc22cc"/>
<rect x="786.5" y="693.9820269200317" width="2.2" height="13.517973079968328" fill="#cc22cc"/>
<rect x="793.5" y="697.2486935866983" width="2.2" height="10.251306413301677" fill="#cc22cc"/>
<rect x="800.5" y="700.2942201108472" width="2.2" height="7.205779889152836" fill="#cc22cc"/>
<rect x="807.5" y="702.8608867775139" width="2.2" height="4.639113222486117" fill="#cc22cc"/>
<rect x="814.5" y="705.4275534441805" width="2.2" height="2.0724465558195106" fill="#cc22cc"/>
<rect x="821.5" y="705.0710213776722" width="2.2" height="2.4289786223278043" fill="#cc22cc"/>
<rect x="828.5" y="703.8460213776723" width="2.2" height="3.6539786223277133" fill="#cc22cc"/>
<rect x="835.5" y="702.4109720445825" width="2.2" height="5.089027955417464" fill="#cc22cc"/>
<rect x="842.5" y="701.3255435775627" width="2.2" height="6.174456422437288" fill="#cc22cc"/>
<rect x="849.5" y="701.0024666544857" width="2.2" height="6.4975333455142845" fill="#cc22cc"/>
<path d="M115.0,696.9 C118.0,697.5 127.4,699.4 132.8,700.5 C138.3,701.6 142.7,702.3 147.7,703.4 C152.6,704.6 158.1,706.2 162.5,707.3 C167.0,708.4 170.4,709.7 174.4,710.3 C178.3,710.9 181.3,711.5 186.3,710.9 C191.2,710.2 198.1,707.7 204.1,706.4 C210.0,705.1 216.0,703.9 221.9,702.9 C227.8,701.8 234.8,700.5 239.7,699.9 C244.7,699.2 246.6,698.4 251.6,699.0 C256.5,699.6 263.5,702.1 269.4,703.4 C275.3,704.8 281.3,706.1 287.2,707.3 C293.1,708.5 299.1,710.0 305.0,710.9 C311.0,711.7 316.9,712.0 322.8,712.4 C328.8,712.7 334.7,713.2 340.7,713.2 C346.6,713.2 352.5,712.7 358.5,712.4 C364.4,712.0 370.3,711.9 376.3,710.9 C382.2,709.9 388.2,708.2 394.1,706.4 C400.0,704.6 406.0,701.4 411.9,699.9 C417.9,698.4 423.8,698.0 429.7,697.5 C435.7,697.0 442.6,697.0 447.5,696.9 C452.5,696.8 454.5,697.3 459.4,696.9 C464.4,696.5 472.0,695.4 477.2,694.5 C482.4,693.6 485.5,692.7 490.6,691.6 C495.7,690.5 503.0,689.0 507.8,688.0 C512.7,687.0 515.2,686.8 519.7,685.6 C524.1,684.5 529.6,682.9 534.5,681.2 C539.5,679.4 544.4,677.4 549.4,675.2 C554.3,673.1 559.3,669.9 564.2,668.4 C569.2,666.9 574.1,667.2 579.1,666.3 C584.0,665.5 589.0,664.2 593.9,663.4 C598.9,662.5 603.3,661.3 608.8,661.3 C614.2,661.3 621.1,662.2 626.6,663.4 C632.0,664.5 636.5,665.9 641.4,668.4 C646.4,670.9 651.8,674.9 656.3,678.2 C660.7,681.5 663.7,684.3 668.1,688.0 C672.6,691.7 678.0,696.3 683.0,700.5 C687.9,704.6 692.9,709.0 697.8,712.9 C702.8,716.9 707.7,721.1 712.7,724.2 C717.6,727.3 722.6,729.8 727.5,731.7 C732.5,733.5 738.4,734.6 742.4,735.2 C746.3,735.8 746.8,736.1 751.3,735.2 C755.7,734.4 764.1,732.1 769.1,730.2 C774.0,728.2 776.0,726.1 781.0,723.6 C785.9,721.2 792.9,717.2 798.8,715.3 C804.7,713.4 811.2,713.3 816.6,712.4 C822.0,711.4 825.8,710.4 831.4,709.4 C837.1,708.4 847.5,706.9 850.7,706.4" fill="none" stroke="#c01414" stroke-width="1.9"/>
<path d="M115.0,702.9 C118.0,703.4 127.4,705.3 132.8,706.4 C138.3,707.5 143.2,708.1 147.7,709.4 C152.1,710.6 155.6,712.7 159.5,713.8 C163.5,714.9 167.5,716.2 171.4,715.9 C175.4,715.7 179.3,713.9 183.3,712.4 C187.2,710.8 191.7,708.6 195.2,706.4 C198.6,704.2 200.6,701.0 204.1,699.0 C207.5,697.0 212.0,695.2 216.0,694.5 C219.9,693.9 223.9,694.6 227.8,695.1 C231.8,695.6 235.7,696.6 239.7,697.5 C243.7,698.4 248.1,699.0 251.6,700.5 C255.0,702.0 256.5,704.9 260.5,706.4 C264.4,707.9 269.9,707.9 275.3,709.4 C280.8,710.9 288.2,714.6 293.1,715.3 C298.1,716.1 301.1,714.4 305.0,713.8 C309.0,713.2 312.0,711.9 316.9,711.8 C321.8,711.6 328.8,712.7 334.7,712.9 C340.7,713.1 347.1,713.3 352.5,712.9 C358.0,712.6 362.4,712.0 367.4,710.9 C372.3,709.8 377.3,708.9 382.2,706.4 C387.2,703.9 392.6,698.3 397.1,696.0 C401.5,693.7 405.0,693.0 408.9,692.5 C412.9,692.0 415.9,692.4 420.8,693.1 C425.8,693.7 432.7,696.1 438.6,696.6 C444.6,697.1 450.5,696.9 456.4,696.0 C462.4,695.2 468.6,693.1 474.3,691.6 C480.0,690.1 486.0,688.7 490.6,687.1 C495.2,685.5 498.0,683.3 501.9,682.1 C505.7,680.8 509.8,680.7 513.8,679.7 C517.7,678.7 521.7,677.7 525.6,676.1 C529.6,674.5 533.5,672.3 537.5,670.2 C541.5,668.1 545.9,665.0 549.4,663.4 C552.8,661.7 554.8,661.0 558.3,660.4 C561.8,659.8 566.9,659.2 570.2,659.8 C573.4,660.4 575.1,664.4 577.6,664.3 C580.1,664.1 582.3,660.2 585.0,658.9 C587.7,657.6 591.0,656.8 593.9,656.5 C596.9,656.3 599.4,656.6 602.8,657.4 C606.3,658.2 610.7,659.6 614.7,661.3 C618.7,663.0 622.6,665.0 626.6,667.8 C630.5,670.6 634.5,674.5 638.5,678.2 C642.4,681.9 646.4,685.6 650.3,690.1 C654.3,694.5 658.3,700.5 662.2,704.9 C666.2,709.4 670.1,713.2 674.1,716.8 C678.0,720.4 682.0,723.5 686.0,726.6 C689.9,729.7 693.9,733.0 697.8,735.5 C701.8,738.0 705.8,740.0 709.7,741.4 C713.7,742.9 717.6,744.3 721.6,744.4 C725.6,744.5 730.5,742.4 733.5,742.0 C736.4,741.6 736.9,742.8 739.4,742.0 C741.9,741.3 744.8,740.7 748.3,737.6 C751.8,734.5 756.2,727.9 760.2,723.6 C764.1,719.3 767.6,714.5 772.1,711.8 C776.5,709.0 782.5,708.0 786.9,707.3 C791.4,706.6 793.8,706.7 798.8,707.3 C803.7,707.9 811.7,711.0 816.6,710.9 C821.6,710.7 824.5,707.9 828.5,706.4 C832.4,704.9 836.6,703.0 840.4,702.0 C844.1,700.9 849.0,700.2 850.7,699.9" fill="none" stroke="#1cb41c" stroke-width="1.9"/>
<rect x="115" y="750" width="1043" height="1" fill="#555"/>
<rect x="115" y="768.7" width="992" height="70.5" fill="#0e0310"/>
<line x1="115" y1="786.5" x2="1111" y2="786.5" stroke="#a8a8a8" stroke-opacity="0.45"/>
<line x1="115" y1="821.5" x2="1111" y2="821.5" stroke="#a8a8a8" stroke-opacity="0.45"/>
<line x1="115" y1="769.5" x2="1107" y2="769.5" stroke="#ff0a14" stroke-width="1.3"/>
<line x1="115" y1="768" x2="1107" y2="768" stroke="#aaa" stroke-width="1" stroke-dasharray="6,5" stroke-dashoffset="3"/>
<line x1="115" y1="803.5" x2="1107" y2="803.5" stroke="#22dd22" stroke-width="1.3"/>
<line x1="115" y1="839" x2="1107" y2="839" stroke="#777" stroke-width="1"/>
<line x1="115" y1="839" x2="1107" y2="839" stroke="#f0a020" stroke-width="1.1" stroke-dasharray="7,6"/>
<line x1="115" y1="850.5" x2="1107" y2="850.5" stroke="#555"/>
<polyline points="115.0,804.9 118.9,804.9 126.0,813.8 132.8,804.0 139.9,812.9 146.8,815.9 153.9,820.4 161.0,820.4 167.9,820.4 175.0,813.8 181.8,799.0 188.9,790.1 195.8,790.1 202.9,779.7 208.8,768.4 216.8,779.7 224.0,796.0 230.8,796.0 236.7,796.0 243.6,804.9 250.7,809.4 257.5,823.3 264.6,818.3 271.5,818.3 278.6,808.8 285.4,815.9 292.6,823.3 299.4,806.4 306.5,806.4 313.3,798.1 320.5,805.5 327.3,813.2 334.4,809.4 341.5,809.4 348.4,809.4 355.5,809.4 362.3,804.9 369.5,795.1 376.3,801.1 383.4,788.6 390.2,781.2 396.2,770.2 403.3,780.3 410.4,785.0 417.3,789.5 424.4,798.1 431.2,798.1 438.3,798.1 445.2,790.1 452.3,795.1 459.4,791.0 466.2,784.1 473.4,774.3 480.2,785.6 487.3,779.7 490.0,778.2 494.5,776.7 501.9,765.4 508.4,776.1 515.8,781.2 522.7,773.8 530.1,767.8 537.5,763.4 544.3,756.8 550.9,755.9 564.2,755.9 571.7,767.8 577.6,788.0 584.4,762.5 591.8,770.2 599.0,774.3 605.8,778.2 612.6,785.0 619.2,785.0 626.6,792.5 633.4,804.9 639.9,804.9 647.4,815.9 653.9,821.3 661.3,833.7 668.1,829.6 675.6,831.7 682.4,836.7 688.9,837.0 696.4,839.1 703.8,839.1 710.6,842.9 717.7,839.1 724.6,829.6 732.0,823.6 738.5,830.2 745.3,816.8 752.8,802.0 759.6,787.1 766.7,782.1 773.6,790.1 780.4,796.6 787.5,799.6 794.3,802.9 801.2,811.8 808.3,808.5 815.1,811.8 821.9,797.5 828.5,792.5 835.9,792.5 842.7,790.1 849.9,795.1" fill="none" stroke="#b8a8b8" stroke-width="2" stroke-linejoin="round"/>
<line x1="689" y1="848" x2="940" y2="773" stroke="#d8c020" stroke-width="1.2"/>
<text x="1114" y="791.0" font-size="11.2" fill="#c4c4c4" font-weight="bold" font-family="Liberation Sans">60.0000</text>
<text x="1114" y="826.0" font-size="11.2" fill="#c4c4c4" font-weight="bold" font-family="Liberation Sans">40.0000</text>
<rect x="1107.5" y="762" width="49.5" height="15" fill="#ff1010"/>
<text x="1132" y="773.5" text-anchor="middle" font-size="12" fill="#fff" font-weight="bold" font-family="Liberation Sans">69.6114</text>
<rect x="1107.5" y="796.5" width="49.5" height="14.5" fill="#10ee10"/>
<text x="1132" y="807.5" text-anchor="middle" font-size="12" fill="#111" font-weight="bold" font-family="Liberation Sans">50.4232</text>
<rect x="1107.5" y="832" width="49.5" height="15.5" fill="#ff9900"/>
<text x="1132" y="844.0" text-anchor="middle" font-size="12" fill="#fff" font-weight="bold" font-family="Liberation Sans">30.1063</text>
<polyline points="926,715 936.5,725 953.5,705.5" fill="none" stroke="#10e610" stroke-width="8.5" stroke-linecap="round" stroke-linejoin="round"/>
<polyline points="926,823 936.5,833 953.5,813.5" fill="none" stroke="#10e610" stroke-width="8.5" stroke-linecap="round" stroke-linejoin="round"/>
<line x1="147.5" y1="850" x2="147.5" y2="854" stroke="#777"/>
<text x="147.5" y="865" text-anchor="middle" font-size="11.2" fill="#c4c4c4" font-weight="bold" font-family="Liberation Sans">Sep</text>
<line x1="293.5" y1="850" x2="293.5" y2="854" stroke="#777"/>
<text x="293.5" y="865" text-anchor="middle" font-size="11.2" fill="#c4c4c4" font-weight="bold" font-family="Liberation Sans">Oct</text>
<line x1="440.5" y1="850" x2="440.5" y2="854" stroke="#777"/>
<text x="440.5" y="865" text-anchor="middle" font-size="11.2" fill="#c4c4c4" font-weight="bold" font-family="Liberation Sans">Nov</text>
<line x1="516.5" y1="850" x2="516.5" y2="854" stroke="#777"/>
<text x="516.5" y="865" text-anchor="middle" font-size="11.2" fill="#c4c4c4" font-weight="bold" font-family="Liberation Sans">16</text>
<line x1="592.5" y1="850" x2="592.5" y2="854" stroke="#777"/>
<text x="592.5" y="865" text-anchor="middle" font-size="11.2" fill="#c4c4c4" font-weight="bold" font-family="Liberation Sans">Dec</text>
<line x1="732.5" y1="850" x2="732.5" y2="854" stroke="#777"/>
<text x="732.5" y="865" text-anchor="middle" font-size="11.2" fill="#c4c4c4" font-weight="bold" font-family="Liberation Sans">2023</text>
<line x1="871.5" y1="850" x2="871.5" y2="854" stroke="#777"/>
<text x="871.5" y="865" text-anchor="middle" font-size="11.2" fill="#c4c4c4" font-weight="bold" font-family="Liberation Sans">Feb</text>
<line x1="1010.5" y1="850" x2="1010.5" y2="854" stroke="#777"/>
<text x="1010.5" y="865" text-anchor="middle" font-size="11.2" fill="#c4c4c4" font-weight="bold" font-family="Liberation Sans">Mar</text>
<line x1="1087.5" y1="850" x2="1087.5" y2="854" stroke="#777"/>
<text x="1087.5" y="865" text-anchor="middle" font-size="11.2" fill="#c4c4c4" font-weight="bold" font-family="Liberation Sans">16</text>
</svg>
<!-- chart handle -->
<div class="a" style="left:113px;top:511px;width:10px;height:29px;background:#444342;border:1px solid #7a7a7a"></div>
<svg class="a" style="left:110px;top:515px" width="16" height="22"><polyline points="6.3,6.5 9.3,10.5 6.3,14.5" fill="none" stroke="#b8c0c8" stroke-width="1.4" stroke-linecap="round"/></svg>
<!-- time range bar -->
<div class="a" style="left:115px;top:869px;width:1043px;height:22px;background:#464543"></div>
<div class="t" style="left:114px;top:873px;width:40px;text-align:center;font-size:12px;font-weight:bold;color:#8a8a8a">1d</div>
<div class="t" style="left:153px;top:873px;width:40px;text-align:center;font-size:12px;font-weight:bold;color:#8a8a8a">5d</div>
<div class="t" style="left:193px;top:873px;width:40px;text-align:center;font-size:12px;font-weight:bold;color:#8a8a8a">1m</div>
<div class="t" style="left:235px;top:873px;width:40px;text-align:center;font-size:12px;font-weight:bold;color:#8a8a8a">6m</div>
<div class="t" style="left:275px;top:873px;width:40px;text-align:center;font-size:12px;font-weight:bold;color:#8a8a8a">1y</div>
<div class="t" style="left:313px;top:873px;width:40px;text-align:center;font-size:12px;font-weight:bold;color:#8a8a8a">5y</div>
<div class="t" style="left:352px;top:873px;width:40px;text-align:center;font-size:12px;font-weight:bold;color:#8a8a8a">All</div>
<svg class="a" style="left:0;top:869px" width="400" height="22"><line x1="153.5" y1="3" x2="153.5" y2="18" stroke="#aaa"/><line x1="192.5" y1="3" x2="192.5" y2="18" stroke="#aaa"/><line x1="233.5" y1="3" x2="233.5" y2="18" stroke="#aaa"/><line x1="275.5" y1="3" x2="275.5" y2="18" stroke="#aaa"/><line x1="313.5" y1="3" x2="313.5" y2="18" stroke="#aaa"/><line x1="351.5" y1="3" x2="351.5" y2="18" stroke="#aaa"/></svg>
</body></html>
